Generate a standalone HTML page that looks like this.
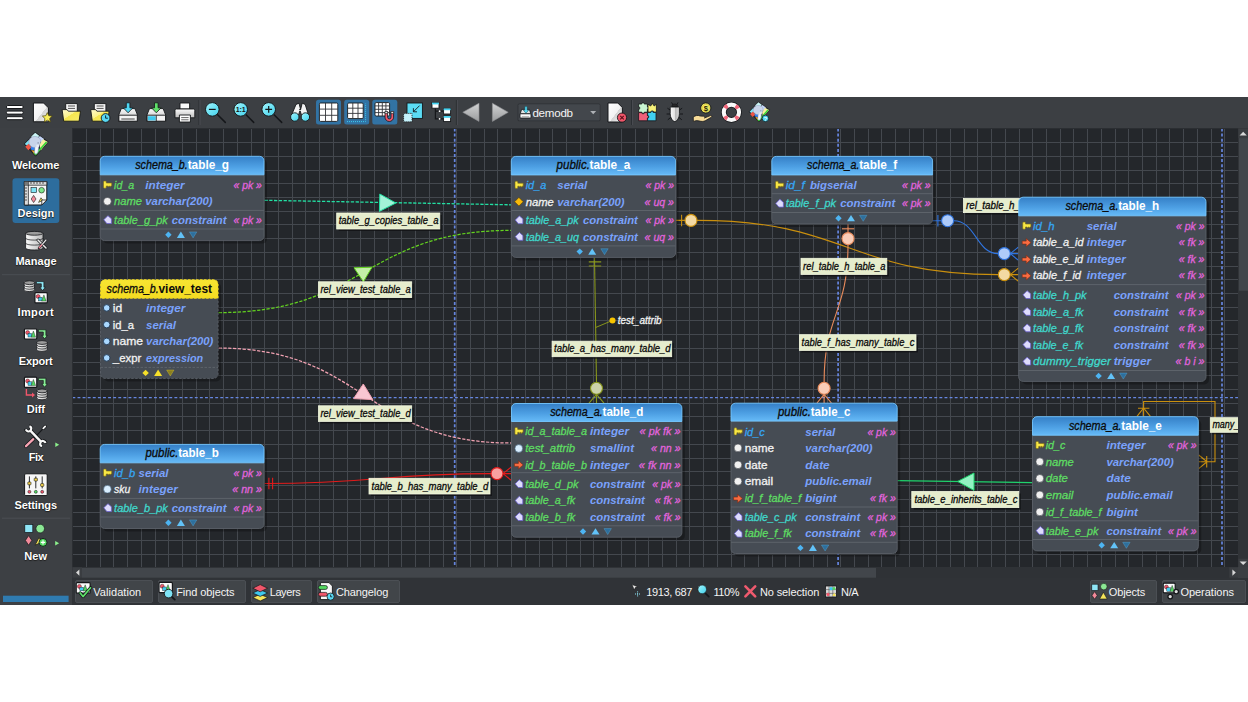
<!DOCTYPE html>
<html lang="en"><head><meta charset="utf-8"><title>pgModeler - demodb</title>
<style>
html,body{margin:0;padding:0;background:#fff;}
body{width:1248px;height:702px;overflow:hidden;position:relative;font-family:"Liberation Sans",sans-serif;}
#app{position:absolute;left:0;top:97px;width:1248px;height:508px;background:#3c3f43;overflow:hidden;}
#app svg{position:absolute;left:0;top:0;}
.t{position:absolute;white-space:pre;line-height:16px;height:16px;}
.sb{text-shadow:0 0 1px #111,0 1px 1px #222;}
#toolbar{position:absolute;left:0;top:0;width:1248px;height:32px;background:#3c3f43;}
#sidebar{position:absolute;left:0;top:31px;width:72px;height:477px;background:#3d4044;}
#canvas{position:absolute;left:72px;top:31px;width:1166px;height:439px;background:#24272b;overflow:hidden;}
#vscroll{position:absolute;left:1238px;top:31px;width:10px;height:439px;background:#303337;}
#hscroll{position:absolute;left:72px;top:470px;width:1166px;height:11px;background:#2f3236;}
#bottombar{position:absolute;left:72px;top:481px;width:1176px;height:27px;background:#303337;}
.btn{position:absolute;top:2.3px;height:22.9px;background:#414549;border:1px solid #4b4f54;box-sizing:border-box;border-radius:2px;}
</style></head><body>
<svg width="0" height="0" style="position:absolute"><defs>
<linearGradient id="gt" x1="0" y1="0" x2="0" y2="1"><stop offset="0" stop-color="#357fc6"/><stop offset="0.55" stop-color="#4d9fe3"/><stop offset="1" stop-color="#66baf7"/></linearGradient>
<linearGradient id="gv" x1="0" y1="0" x2="0" y2="1"><stop offset="0" stop-color="#f7e532"/><stop offset="1" stop-color="#f4dc22"/></linearGradient>
<linearGradient id="gpaper" x1="0" y1="0" x2="1" y2="1"><stop offset="0" stop-color="#ffffff"/><stop offset="0.55" stop-color="#f2f2f2"/><stop offset="0.56" stop-color="#d4d4d4"/><stop offset="1" stop-color="#f6f6f6"/></linearGradient>
<linearGradient id="gfold" x1="0" y1="0" x2="1" y2="1"><stop offset="0" stop-color="#fffbd0"/><stop offset="0.45" stop-color="#fbf28a"/><stop offset="0.47" stop-color="#f5e650"/><stop offset="1" stop-color="#f8ec6a"/></linearGradient>
<linearGradient id="gdrive" x1="0" y1="0" x2="0" y2="1"><stop offset="0" stop-color="#fafafa"/><stop offset="1" stop-color="#bdbdbd"/></linearGradient>
<linearGradient id="gcyan" x1="0" y1="0" x2="1" y2="1"><stop offset="0" stop-color="#a8f3fb"/><stop offset="0.5" stop-color="#6fe4f6"/><stop offset="1" stop-color="#45cfe9"/></linearGradient>
<linearGradient id="garrow" x1="0" y1="0" x2="0" y2="1"><stop offset="0" stop-color="#d2d3d4"/><stop offset="1" stop-color="#9a9c9e"/></linearGradient>
<linearGradient id="gbug" x1="0" y1="0" x2="1" y2="0"><stop offset="0" stop-color="#fafafa"/><stop offset="0.5" stop-color="#e2e2e2"/><stop offset="0.51" stop-color="#b5b5b5"/><stop offset="1" stop-color="#d8d8d8"/></linearGradient>
<linearGradient id="gcyl" x1="0" y1="0" x2="1" y2="0"><stop offset="0" stop-color="#fafafa"/><stop offset="1" stop-color="#b9b9b9"/></linearGradient>
</defs></svg>
<div id="app">
<div id="toolbar">
<svg width="1248.0" height="32.0" viewBox="0.0 97.0 1248.0 32.0" font-family="Liberation Sans, sans-serif">
<rect x="6.4" y="105.5" width="16.8" height="3" rx="1.4" fill="#fff" stroke="#15171a" stroke-width="1"/>
<rect x="6.4" y="111.1" width="16.8" height="3" rx="1.4" fill="#fff" stroke="#15171a" stroke-width="1"/>
<rect x="6.4" y="116.7" width="16.8" height="3" rx="1.4" fill="#fff" stroke="#15171a" stroke-width="1"/>
<path d="M33.4 103h10.2l4.8 4.8v14h-15z" fill="url(#gpaper)" stroke="#15171a" stroke-width="1"/>
<path d="M47.3 112.6l1.5 3.1 3.4 0.4-2.5 2.4 0.7 3.4-3.1-1.7-3 1.7 0.6-3.4-2.5-2.4 3.4-0.4z" fill="#f9ee5a" stroke="#4a4208" stroke-width="0.7"/>
<path d="M65.7 103.6h11.6v9h-11.6z" fill="#f4f4f4" stroke="#15171a" stroke-width="0.9"/><path d="M68.0 106h7M68.0 108.4h7" stroke="#555" stroke-width="1"/><path d="M62.1 109.6h5l1.2 1.6h12.2l-1.4 10h-15.4z" fill="url(#gfold)" stroke="#15171a" stroke-width="0.9"/>
<path d="M94.3 103.6h11.6v9h-11.6z" fill="#f4f4f4" stroke="#15171a" stroke-width="0.9"/><path d="M96.6 106h7M96.6 108.4h7" stroke="#555" stroke-width="1"/><path d="M90.7 109.6h5l1.2 1.6h12.2l-1.4 10h-15.4z" fill="url(#gfold)" stroke="#15171a" stroke-width="0.9"/>
<circle cx="105.6" cy="118" r="4.4" fill="#58d8f3" stroke="#15171a" stroke-width="0.9"/><path d="M105.6 115.4v2.8h2.2" stroke="#0b2b38" stroke-width="1" fill="none"/>
<path d="M121.3 108.6h13.6l2.6 6.4v6.4h-18.8v-6.4z" fill="url(#gdrive)" stroke="#15171a" stroke-width="0.9"/><path d="M118.89999999999999 115.2h18.4v6h-18.4z" fill="#f3f3f3" stroke="#15171a" stroke-width="0.9"/><path d="M121.3 119h13.4" stroke="#444" stroke-width="1"/><path d="M126.3 102.8h3.6v5h3l-4.8 5-4.8-5h3z" fill="#4fd6f2" stroke="#15171a" stroke-width="0.8"/>
<path d="M149.5 108.6h13.6l2.6 6.4v6.4h-18.8v-6.4z" fill="url(#gdrive)" stroke="#15171a" stroke-width="0.9"/><path d="M147.1 115.2h18.4v6h-18.4z" fill="#f3f3f3" stroke="#15171a" stroke-width="0.9"/><rect x="147.9" y="116.2" width="7.8" height="4.2" fill="#3fc9ee"/><path d="M156.3 115.4v5.8" stroke="#15171a" stroke-width="0.8"/><path d="M154.5 102.8h3.6v5h3l-4.8 5-4.8-5h3z" fill="#5fe06a" stroke="#15171a" stroke-width="0.8"/>
<path d="M180.0 103h9.6v6h-9.6z" fill="#fafafa" stroke="#15171a" stroke-width="0.9"/>
<path d="M176.4 109h17a1.4 1.4 0 0 1 1.4 1.4v7.4h-19.8v-7.4a1.4 1.4 0 0 1 1.4-1.4z" fill="url(#gdrive)" stroke="#15171a" stroke-width="0.9"/>
<path d="M179.4 115h11v7h-11z" fill="#fff" stroke="#15171a" stroke-width="0.9"/><path d="M181.20000000000002 117.6h7.4M181.20000000000002 119.8h7.4" stroke="#555" stroke-width="0.9"/>
<path d="M199 100v25" stroke="#2b2e32" stroke-width="1"/><path d="M200 100v25" stroke="#4a4d52" stroke-width="1"/>
<path d="M216.9 114l8.4 8.4" stroke="#15171a" stroke-width="1.5" stroke-linecap="round"/><circle cx="212.3" cy="109.4" r="6.8" fill="url(#gcyan)" stroke="#15171a" stroke-width="1"/><path d="M208.9 109.4h6.8" stroke="#15171a" stroke-width="1.2"/>
<path d="M245.29999999999998 114l8.4 8.4" stroke="#15171a" stroke-width="1.5" stroke-linecap="round"/><circle cx="240.7" cy="109.4" r="6.8" fill="url(#gcyan)" stroke="#15171a" stroke-width="1"/><text x="240.7" y="112.1" font-size="7" style="font-weight:bold" fill="#15171a" text-anchor="middle">1:1</text>
<path d="M273.3 114l8.4 8.4" stroke="#15171a" stroke-width="1.5" stroke-linecap="round"/><circle cx="268.7" cy="109.4" r="6.8" fill="url(#gcyan)" stroke="#15171a" stroke-width="1"/><path d="M265.3 109.4h6.8M268.7 106v6.8" stroke="#15171a" stroke-width="1.2"/>
<path d="M296 104.4l3-1.2 1.6 6.4h-1.2l1.2 0 1.6-6.4 3 1.2 3.6 11.6h-7l-1.6-5h-0.4l-1.6 5h-7z" fill="#f3f3f3" stroke="#15171a" stroke-width="0.9"/>
<circle cx="294.8" cy="117" r="4.2" fill="url(#gcyan)" stroke="#15171a" stroke-width="0.9"/><circle cx="305.4" cy="117" r="4.2" fill="url(#gcyan)" stroke="#15171a" stroke-width="0.9"/>
<rect x="316" y="99.8" width="25" height="24.8" rx="2.5" fill="#3273a4"/>
<rect x="344.2" y="99.8" width="25" height="24.8" rx="2.5" fill="#3273a4"/>
<rect x="372.3" y="99.8" width="25" height="24.8" rx="2.5" fill="#3273a4"/>
<rect x="319.4" y="103" width="18.4" height="18.4" rx="1.2" fill="#fff" stroke="#15171a" stroke-width="0.9"/><path d="M325.5 103v18.4M319.4 109.1h18.4" stroke="#33363a" stroke-width="0.9"/><path d="M331.7 103v18.4M319.4 115.3h18.4" stroke="#33363a" stroke-width="0.9"/>
<rect x="347.6" y="103" width="15.6" height="15.6" rx="1.2" fill="#fff" stroke="#15171a" stroke-width="0.9"/><path d="M352.8 103v15.6M347.6 108.2h15.6" stroke="#33363a" stroke-width="0.9"/><path d="M358.0 103v15.6M347.6 113.4h15.6" stroke="#33363a" stroke-width="0.9"/>
<path d="M347 121.6h18.6v-18" stroke="#3fc9ee" stroke-width="1" stroke-dasharray="1 1" fill="none"/>
<rect x="375" y="102.6" width="14.6" height="13.4" rx="1.2" fill="#fff" stroke="#15171a" stroke-width="0.9"/><path d="M378.6 102.6v13.4M375 105.9h14.6" stroke="#33363a" stroke-width="0.9"/><path d="M382.3 102.6v13.4M375 109.3h14.6" stroke="#33363a" stroke-width="0.9"/><path d="M385.9 102.6v13.4M375 112.6h14.6" stroke="#33363a" stroke-width="0.9"/>
<path d="M385 111.6v5.6a4.3 4.3 0 0 0 8.6 0v-5.6h-2.6v5.6a1.7 1.7 0 0 1-3.4 0v-5.6z" fill="#f0566a" stroke="#15171a" stroke-width="0.8"/><path d="M385 111.6h2.6v2h-2.6zM391 111.6h2.6v2h-2.6z" fill="#f3f3f3" stroke="#15171a" stroke-width="0.6"/>
<rect x="407" y="103" width="15.400" height="15.400" fill="#5bdcf5" stroke="#15171a" stroke-width="0.9"/>
<path d="M419.600 105.600l-6.200 6.200M413.400 108.200v3.600h3.600" stroke="#15171a" stroke-width="0.9" fill="none"/>
<rect x="403.600" y="113.400" width="8.400" height="8.400" fill="#c4f1fb" stroke="#15171a" stroke-width="0.8" stroke-dasharray="1.2 0.8"/>
<rect x="432" y="102.6" width="7" height="5.6" fill="#fff" stroke="#15171a" stroke-width="0.9"/><rect x="432" y="102.6" width="7" height="1.8" fill="#46d3f0"/>
<rect x="443.6" y="108.4" width="7" height="5.6" fill="#fff" stroke="#15171a" stroke-width="0.9"/><rect x="443.6" y="108.4" width="7" height="1.8" fill="#46d3f0"/>
<rect x="443.6" y="116" width="7" height="5.6" fill="#fff" stroke="#15171a" stroke-width="0.9"/><rect x="443.6" y="116" width="7" height="1.8" fill="#46d3f0"/>
<path d="M435.4 108.4v10.4h7.6M435.4 111.2h7.6" stroke="#15171a" stroke-width="1.2" fill="none"/><circle cx="439.6" cy="111.2" r="0.9" fill="#fff"/><circle cx="439.6" cy="118.8" r="0.9" fill="#fff"/>
<path d="M456.4 100v25" stroke="#2b2e32" stroke-width="1"/><path d="M457.4 100v25" stroke="#4a4d52" stroke-width="1"/>
<path d="M479 103.2v18.2l-16.2-9.1z" fill="url(#garrow)" stroke="#8d8f92" stroke-width="0.6"/>
<path d="M492.4 103.2v18.2l15.8-9.1z" fill="url(#garrow)" stroke="#8d8f92" stroke-width="0.6"/>
<rect x="517.600" y="103.400" width="82.800" height="17.800" rx="1.500" fill="#2d3034"/><rect x="518.400" y="104.200" width="81.400" height="16.400" rx="1" fill="#43474c"/>
<path d="M521.600 109.400h7.800l1.400 4.400h-10.600z" fill="#e4e4e4" stroke="#15171a" stroke-width="0.800"/>
<rect x="520" y="113.800" width="11" height="4.200" rx="0.800" fill="#fafafa" stroke="#15171a" stroke-width="0.800"/><path d="M521.800 116.600h7.400" stroke="#9a9a9a" stroke-width="0.700"/>
<path d="M524.900 106.600h2.200v3.600h1.600l-2.700 3-2.700-3h1.600z" fill="#55dcf5" stroke="#14505e" stroke-width="0.500"/>
<path d="M590.2 111l3 3.2 3-3.2z" fill="#aeb1b5"/>
<path d="M608 103h9.8l4.6 4.6v14.4h-14.4z" fill="url(#gpaper)" stroke="#15171a" stroke-width="1"/>
<circle cx="622" cy="117.6" r="4.6" fill="#f0566a" stroke="#15171a" stroke-width="0.9"/><path d="M620.2 115.8l3.6 3.6M623.8 115.8l-3.6 3.6" stroke="#5a0f18" stroke-width="1.1"/>
<path d="M631.6 100v25" stroke="#2b2e32" stroke-width="1"/><path d="M632.6 100v25" stroke="#4a4d52" stroke-width="1"/>
<path d="M638.6 104h3.2c-0.9-1.500 3.300-1.500 2.400 0h3.200v2.800c1.500-0.900 1.500 3.300 0 2.400v3h-3.100c0.900 1.500-3.300 1.500-2.400 0h-3.300v-2.900c1.500 0.900 1.500-3.300 0-2.400z" fill="#c9f6d2" stroke="#15171a" stroke-width="0.8"/>
<path d="M648 104.200l2.600 1.800 1.800-2.600 1.800 2.600 2.200-1.800v8h-2.800c0.900-1.500-3.300-1.500-2.400 0h-3.200z" fill="#f6f17a" stroke="#15171a" stroke-width="0.8"/>
<path d="M638.600 112.600h3.300c-0.900 1.500 3.300 1.500 2.400 0h3.100v3c1.500-0.900 1.500 3.300 0 2.400v2.800h-8.800z" fill="#f0607a" stroke="#15171a" stroke-width="0.8"/>
<path d="M647.600 112.400h3.200c-0.900-1.500 3.300-1.500 2.400 0h2.800v8.400h-8.400v-2.800c1.500 0.900 1.500-3.300 0-2.400z" fill="#41d1f1" stroke="#15171a" stroke-width="0.8"/>
<path d="M671 110.600l-3.600-2.400M678.600 110.600l3.600-2.400M671 114h-4.400M678.600 114h4.400M671.200 117l-3.400 2.800M678.400 117l3.400 2.800M673 105l-1.400-2.600M676.600 105l1.400-2.600" stroke="#15171a" stroke-width="1" fill="none"/>
<path d="M674.800 104c1.800 0 2.800 1 2.800 2.400h-5.600c0-1.400 1-2.400 2.800-2.400z" fill="#2a2a2a" stroke="#15171a" stroke-width="0.8"/>
<path d="M670.800 107h8c0.400 0 0.600 0.300 0.600 0.800v5.800c0 4-2.400 8-4.600 8s-4.600-4-4.600-8v-5.800c0-0.500 0.200-0.800 0.600-0.800z" fill="url(#gbug)" stroke="#15171a" stroke-width="0.9"/>
<circle cx="705.800" cy="108" r="5.100" fill="#f8f062" stroke="#15171a" stroke-width="0.9"/><circle cx="705.800" cy="108" r="3.700" fill="none" stroke="#c9b93a" stroke-width="0.600"/><text x="705.800" y="110.700" font-size="7.500" style="font-weight:bold" fill="#2a2608" text-anchor="middle">$</text>
<path d="M693.200 117c2.200-1.600 4.800-2 7-1l3.400 0.200c1.400 0.200 1.800 1.400 0.800 1.800l6-2.400c1.200-0.400 2 0.600 1 1.600l-6.200 3.600c-1.800 0.800-3.800 0.800-5.800 0.200l-2.800-0.400l-3.200 0.800z" fill="#f8dc98" stroke="#15171a" stroke-width="0.8"/>
<circle cx="731.4" cy="112.3" r="7.65" fill="none" stroke="#15171a" stroke-width="5.7"/><circle cx="731.4" cy="112.3" r="7.65" fill="none" stroke="#fafafa" stroke-width="4.1"/>
<circle cx="731.4" cy="112.3" r="7.65" fill="none" stroke="#f0667a" stroke-width="4.1" stroke-dasharray="3.6 8.417" transform="rotate(31.5 731.4 112.3)"/>
<g transform="translate(759.2 111.8) scale(0.84)"><path d="M-0.900 -11.800L12.100 -2.300L-0.400 12.100L-11.900 -0.100z" fill="#23262a" stroke="#1b1d20" stroke-width="0.800"/><path d="M-0.900 -11.300l4.200 3.100-4.600 3.800-3.600-3.200z" fill="#c9f4f5"/><path d="M3.800 -8l4.200 3-2.600 3.400-4.400-3.600z" fill="#c6d6f8"/><path d="M7 -4.800l4.700 2.600-3.500 4.200-3.600 4.400-1.200-6.200z" fill="#f7f0a0"/><path d="M-11.400 -0.200l4-3.900 2.400 3-3.200 3.200z" fill="#7fe1f1"/><path d="M-10.800 2.600l3.300-3 3 3.600-3.300 3z" fill="#f05544"/><path d="M-5.200 2l4.400 0.600-1 3.800-3.600-1z" fill="#3282f0"/><path d="M-4.800 5.800l3.200 1 1.600-1.600 1 2.600-2.600 2.600z" fill="#f3a321"/><path d="M-3 8.400l2.600 3.100 11.500-13-1.300-1.100-9.900 11.200z" fill="#37d637"/><path d="M-7.200 -2.400c0-3.200 2.600-5.200 5.800-5.200c3.400 0 6 2 6 4.800c0 1.800-0.700 3-1.700 3.900l-0.500 4.300c-0.300 2.200-0.900 4.400-2.400 4.400c-1.300 0-1.800-1.200-1.600-2.800l0.400-3.700c-0.800 0.100-1.700 0-2.600-0.300c-2.200-0.800-3.400-2.800-3.400-5.400z" fill="#c8d4ea" stroke="#8a9cbb" stroke-width="0.500"/><path d="M-0.600 3l-0.500 4.600c-0.100 1.200 0.300 1.900 1 1.900c0.900 0 1.400-1.600 1.600-3l0.500-3.600c-0.800 0.300-1.700 0.300-2.600 0.100z" fill="#f6f7fc"/><path d="M0.400 0.400c1 0.600 2.400 0.400 3-0.600l-0.400 2.600c-0.800 0.600-1.800 0.700-2.800 0.400z" fill="#e9edf6"/><circle cx="2" cy="-1.200" r="0.600" fill="#6b7590"/></g>
<circle cx="765.400" cy="118.400" r="3.300" fill="#46d3f0" stroke="#15171a" stroke-width="0.800"/><text x="765.400" y="120.600" font-size="6" style="font-weight:bold" fill="#e9fbff" text-anchor="middle">?</text>
</svg>
<span class="t" style="left:532.4px;top:8.0px;font-size:11.6px;font-weight:normal;font-style:normal;letter-spacing:-0.253px;color:#f4f4f4">demodb</span>
</div>
<div id="sidebar">
<svg width="72.0" height="477.0" viewBox="0.0 128.0 72.0 477.0" font-family="Liberation Sans, sans-serif">
<g transform="translate(36.1 144.1) scale(1.0)"><path d="M-0.900 -11.800L12.100 -2.300L-0.400 12.100L-11.900 -0.100z" fill="#23262a" stroke="#1b1d20" stroke-width="0.800"/><path d="M-0.900 -11.300l4.200 3.100-4.600 3.800-3.600-3.200z" fill="#c9f4f5"/><path d="M3.800 -8l4.200 3-2.600 3.400-4.400-3.600z" fill="#c6d6f8"/><path d="M7 -4.800l4.700 2.600-3.500 4.200-3.600 4.400-1.200-6.200z" fill="#f7f0a0"/><path d="M-11.400 -0.200l4-3.900 2.400 3-3.200 3.200z" fill="#7fe1f1"/><path d="M-10.800 2.600l3.300-3 3 3.600-3.300 3z" fill="#f05544"/><path d="M-5.200 2l4.400 0.600-1 3.800-3.600-1z" fill="#3282f0"/><path d="M-4.800 5.800l3.200 1 1.600-1.600 1 2.600-2.600 2.600z" fill="#f3a321"/><path d="M-3 8.400l2.600 3.100 11.500-13-1.300-1.100-9.900 11.200z" fill="#37d637"/><path d="M-7.200 -2.400c0-3.200 2.600-5.200 5.800-5.200c3.400 0 6 2 6 4.800c0 1.800-0.700 3-1.700 3.900l-0.500 4.300c-0.300 2.200-0.900 4.400-2.400 4.400c-1.300 0-1.800-1.200-1.600-2.800l0.400-3.700c-0.800 0.100-1.700 0-2.600-0.300c-2.200-0.800-3.400-2.800-3.400-5.400z" fill="#c8d4ea" stroke="#8a9cbb" stroke-width="0.500"/><path d="M-0.600 3l-0.500 4.600c-0.100 1.200 0.300 1.900 1 1.900c0.900 0 1.400-1.600 1.600-3l0.500-3.600c-0.800 0.300-1.700 0.300-2.600 0.100z" fill="#f6f7fc"/><path d="M0.400 0.400c1 0.600 2.400 0.400 3-0.600l-0.400 2.600c-0.800 0.600-1.800 0.700-2.800 0.400z" fill="#e9edf6"/><circle cx="2" cy="-1.200" r="0.600" fill="#6b7590"/></g>
<rect x="12.5" y="178.2" width="46.8" height="44.8" rx="3" fill="#2d6d9d"/>
<path d="M24.4 181.6h22.4v18.4l-5 5h-17.4z" fill="#f7f7f7" stroke="#15171a" stroke-width="1"/>
<path d="M24.4 181.6h22.4v3.6h-22.4zM24.4 181.6h4v23.400h-4z" fill="#dcdcdc" stroke="#15171a" stroke-width="0.7"/>
<rect x="24.4" y="181.6" width="4" height="3.6" fill="#777"/>
<path d="M31 182v2M34 182v2M37 182v2M40 182v2M43 182v2M25 188h2M25 191h2M25 194h2M25 197h2M25 200h2" stroke="#15171a" stroke-width="0.7"/>
<rect x="31" y="187.600" width="5.6" height="5" fill="#7fe3f5" stroke="#15171a" stroke-width="0.6"/>
<circle cx="41.6" cy="190.2" r="2.8" fill="#7fe68a" stroke="#15171a" stroke-width="0.6"/>
<path d="M33.6 195.400l2.400 3.600-2.400 3.600-2.400-3.600z" fill="#f28a9a" stroke="#15171a" stroke-width="0.6"/>
<path d="M38.6 202.400l2.400-4.600 1.800 2.600z" fill="#f5e45a" stroke="#15171a" stroke-width="0.6"/>
<path d="M46.800 200l-5 5v-5z" fill="#fff" stroke="#15171a" stroke-width="0.8"/>
<path d="M25.6 233.3v14.8a8.7 1.9 0 0 0 17.4 0v-14.8z" fill="url(#gcyl)" stroke="#15171a" stroke-width="0.8"/><path d="M25.6 238.2a8.7 1.9 0 0 0 17.4 0" fill="none" stroke="#15171a" stroke-width="0.7"/><path d="M25.6 243.2a8.7 1.9 0 0 0 17.4 0" fill="none" stroke="#15171a" stroke-width="0.7"/><ellipse cx="34.3" cy="233.3" rx="8.7" ry="1.9" fill="#9c9c9c" stroke="#15171a" stroke-width="0.8"/>
<path d="M38 240l8 8" stroke="#15171a" stroke-width="3" stroke-linecap="round"/><path d="M38 240l8 8" stroke="#e8e8e8" stroke-width="1.6" stroke-linecap="round"/>
<path d="M46 240l-7 8" stroke="#15171a" stroke-width="2.4" stroke-linecap="round"/><path d="M46 240l-4 4.600" stroke="#e8e8e8" stroke-width="1.2" stroke-linecap="round"/><path d="M41.600 245l-2.400 2.800" stroke="#f28a9a" stroke-width="1.4" stroke-linecap="round"/>
<path d="M2 274.700h68" stroke="#4b4e53" stroke-width="1"/>
<path d="M24.2 282.7v7.000000000000001a5.2 1.9 0 0 0 10.4 0v-7.000000000000001z" fill="url(#gcyl)" stroke="#15171a" stroke-width="0.8"/><path d="M24.2 285.0a5.2 1.9 0 0 0 10.4 0" fill="none" stroke="#15171a" stroke-width="0.7"/><path d="M24.2 287.4a5.2 1.9 0 0 0 10.4 0" fill="none" stroke="#15171a" stroke-width="0.7"/><ellipse cx="29.4" cy="282.7" rx="5.2" ry="1.9" fill="#9c9c9c" stroke="#15171a" stroke-width="0.8"/>
<path d="M36.4 281.6H43.9V287.2H45.4L42.6 290.6L39.8 287.2H41.3V283.8H36.4z" fill="#8feaf8" stroke="#15171a" stroke-width="0.7"/>
<rect x="34.9" y="292.7" width="12.4" height="10.2" rx="1" fill="#fbfbfb" stroke="#15171a" stroke-width="1.2"/><circle cx="38.1" cy="296.5" r="2" fill="#f0566a" stroke="#15171a" stroke-width="0.4"/><rect x="38.5" y="297.3" width="3.6" height="3.6" fill="#3fc9ee" stroke="#15171a" stroke-width="0.4"/><path d="M41.699999999999996 301.09999999999997l2.200-6.200 2.200 6.200z" fill="#53d860" stroke="#15171a" stroke-width="0.4"/>
<rect x="24.4" y="328.8" width="12.4" height="10.2" rx="1" fill="#fbfbfb" stroke="#15171a" stroke-width="1.2"/><circle cx="27.599999999999998" cy="332.6" r="2" fill="#f0566a" stroke="#15171a" stroke-width="0.4"/><rect x="28.0" y="333.40000000000003" width="3.6" height="3.6" fill="#3fc9ee" stroke="#15171a" stroke-width="0.4"/><path d="M31.2 337.2l2.200-6.200 2.200 6.200z" fill="#53d860" stroke="#15171a" stroke-width="0.4"/>
<path d="M38.4 329.8H45.9V335.4H47.4L44.6 338.8L41.8 335.4H43.3V332.0H38.4z" fill="#86ee94" stroke="#15171a" stroke-width="0.7"/>
<path d="M36.8 342.5v7.000000000000001a5.2 1.9 0 0 0 10.4 0v-7.000000000000001z" fill="url(#gcyl)" stroke="#15171a" stroke-width="0.8"/><path d="M36.8 344.8a5.2 1.9 0 0 0 10.4 0" fill="none" stroke="#15171a" stroke-width="0.7"/><path d="M36.8 347.2a5.2 1.9 0 0 0 10.4 0" fill="none" stroke="#15171a" stroke-width="0.7"/><ellipse cx="42.0" cy="342.5" rx="5.2" ry="1.9" fill="#9c9c9c" stroke="#15171a" stroke-width="0.8"/>
<rect x="24.4" y="377.2" width="12.4" height="10.2" rx="1" fill="#fbfbfb" stroke="#15171a" stroke-width="1.2"/><circle cx="27.599999999999998" cy="381.0" r="2" fill="#f0566a" stroke="#15171a" stroke-width="0.4"/><rect x="28.0" y="381.8" width="3.6" height="3.6" fill="#3fc9ee" stroke="#15171a" stroke-width="0.4"/><path d="M31.2 385.59999999999997l2.200-6.200 2.200 6.200z" fill="#53d860" stroke="#15171a" stroke-width="0.4"/>
<path d="M38.4 378.2H45.9V383.8H47.4L44.6 387.2L41.8 383.8H43.3V380.4H38.4z" fill="#86ee94" stroke="#15171a" stroke-width="0.7"/>
<path d="M36.8 390.9v7.000000000000001a5.2 1.9 0 0 0 10.4 0v-7.000000000000001z" fill="url(#gcyl)" stroke="#15171a" stroke-width="0.8"/><path d="M36.8 393.2a5.2 1.9 0 0 0 10.4 0" fill="none" stroke="#15171a" stroke-width="0.7"/><path d="M36.8 395.6a5.2 1.9 0 0 0 10.4 0" fill="none" stroke="#15171a" stroke-width="0.7"/><ellipse cx="42.0" cy="390.9" rx="5.2" ry="1.9" fill="#9c9c9c" stroke="#15171a" stroke-width="0.8"/>
<path d="M26.400 389v6h6" stroke="#f0566a" stroke-width="1.400" fill="none"/><path d="M32 392.600l3 2.400-3 2.400z" fill="#f0566a"/>
<path d="M44.300 427.400l-11 11.600" stroke="#15171a" stroke-width="1.100" stroke-linecap="round"/>
<path d="M45.200 426.400l-1.900 2" stroke="#15171a" stroke-width="3.200" stroke-linecap="round"/><path d="M45.200 426.400l-1.900 2" stroke="#f6f6f6" stroke-width="1.800" stroke-linecap="round"/>
<path d="M33.300 439.200l-7.300 7" stroke="#15171a" stroke-width="3.800" stroke-linecap="round"/><path d="M33.300 439.200l-7.300 7" stroke="#f7a3b3" stroke-width="2.300" stroke-linecap="round"/>
<path d="M30.400 430.600l10.700 11.200" stroke="#15171a" stroke-width="4" stroke-linecap="butt"/>
<circle cx="28.500" cy="428.700" r="2.700" fill="none" stroke="#15171a" stroke-width="3.600" stroke-dasharray="11.600 5.360" transform="rotate(282 28.500 428.700)"/>
<circle cx="42.900" cy="443.700" r="2.700" fill="none" stroke="#15171a" stroke-width="3.600" stroke-dasharray="11.600 5.360" transform="rotate(102 42.900 443.700)"/>
<path d="M30.400 430.600l10.700 11.200" stroke="#f8f8f8" stroke-width="2.400" stroke-linecap="butt"/>
<circle cx="28.500" cy="428.700" r="2.700" fill="none" stroke="#f8f8f8" stroke-width="2.100" stroke-dasharray="10.800 6.160" transform="rotate(290 28.500 428.700)"/>
<circle cx="42.900" cy="443.700" r="2.700" fill="none" stroke="#f8f8f8" stroke-width="2.100" stroke-dasharray="10.800 6.160" transform="rotate(110 42.900 443.700)"/>
<path d="M55.300 442.500l3.900 2.200-3.900 2.200z" fill="#8cf08c"/>
<rect x="24.600" y="473.800" width="22.600" height="21.800" rx="1.200" fill="#f7f7f7" stroke="#15171a" stroke-width="1"/>
<path d="M29.4 476.400v12" stroke="#15171a" stroke-width="0.9"/>
<rect x="27.799999999999997" y="482.0" width="3.200" height="2.800" rx="0.6" fill="#f5d34a" stroke="#15171a" stroke-width="0.6"/>
<circle cx="29.4" cy="491.800" r="1.500" fill="#f0566a" stroke="#15171a" stroke-width="0.500"/>
<path d="M35.8 476.400v12" stroke="#15171a" stroke-width="0.9"/>
<rect x="34.199999999999996" y="478.20000000000005" width="3.200" height="2.800" rx="0.6" fill="#f5d34a" stroke="#15171a" stroke-width="0.6"/>
<circle cx="35.8" cy="491.800" r="1.500" fill="#53d860" stroke="#15171a" stroke-width="0.500"/>
<path d="M42.2 476.400v12" stroke="#15171a" stroke-width="0.9"/>
<rect x="40.6" y="483.6" width="3.200" height="2.800" rx="0.6" fill="#f5d34a" stroke="#15171a" stroke-width="0.6"/>
<circle cx="42.2" cy="491.800" r="1.500" fill="#f0566a" stroke="#15171a" stroke-width="0.500"/>
<path d="M2 518.200h68" stroke="#4b4e53" stroke-width="1"/>
<rect x="24.800" y="524.400" width="8" height="8" fill="#8fe6f7" stroke="#15171a" stroke-width="0.7"/>
<circle cx="40.200" cy="528.600" r="4.300" fill="#8be894" stroke="#15171a" stroke-width="0.7"/>
<path d="M28.600 535.600l3.200 4.800-3.200 4.800-3.200-4.800z" fill="#f28a9a" stroke="#15171a" stroke-width="0.7"/>
<path d="M35 545.200l4-7.600 3 4.400z" fill="#f5e45a" stroke="#15171a" stroke-width="0.7"/>
<circle cx="43" cy="542.400" r="4" fill="#53d860" stroke="#15171a" stroke-width="0.9"/><path d="M40.800 542.400h4.400M43 540.200v4.400" stroke="#fff" stroke-width="1.200"/>
<path d="M55.200 541l3.900 2.200-3.900 2.200z" fill="#8cf08c"/>
<rect x="3" y="595.700" width="65.600" height="6.300" fill="#2f7bb0"/>
</svg>
<span class="t sb" style="left:12.1px;top:29.3px;font-size:11px;font-weight:bold;font-style:normal;letter-spacing:-0.156px;color:#ffffff">Welcome</span>
<span class="t sb" style="left:17.6px;top:77.4px;font-size:11px;font-weight:bold;font-style:normal;letter-spacing:-0.012px;color:#ffffff">Design</span>
<span class="t sb" style="left:15.4px;top:125.4px;font-size:11px;font-weight:bold;font-style:normal;letter-spacing:0.041px;color:#ffffff">Manage</span>
<span class="t sb" style="left:17.5px;top:176.4px;font-size:11px;font-weight:bold;font-style:normal;letter-spacing:0.380px;color:#ffffff">Import</span>
<span class="t sb" style="left:18.8px;top:225.0px;font-size:11px;font-weight:bold;font-style:normal;letter-spacing:-0.173px;color:#ffffff">Export</span>
<span class="t sb" style="left:26.7px;top:272.6px;font-size:11px;font-weight:bold;font-style:normal;letter-spacing:-0.006px;color:#ffffff">Diff</span>
<span class="t sb" style="left:28.7px;top:321.0px;font-size:11px;font-weight:bold;font-style:normal;letter-spacing:-0.531px;color:#ffffff">Fix</span>
<span class="t sb" style="left:14.4px;top:369.2px;font-size:11px;font-weight:bold;font-style:normal;letter-spacing:-0.099px;color:#ffffff">Settings</span>
<span class="t sb" style="left:24.3px;top:419.8px;font-size:11px;font-weight:bold;font-style:normal;letter-spacing:0.028px;color:#ffffff">New</span>
</div>
<div id="canvas">
<svg width="1166.0" height="439.0" viewBox="72.0 128.0 1166.0 439.0" font-family="Liberation Sans, sans-serif">
<path d="M86.50 128.5V567.3M100.21 128.5V567.3M113.93 128.5V567.3M127.64 128.5V567.3M141.36 128.5V567.3M155.07 128.5V567.3M168.79 128.5V567.3M182.50 128.5V567.3M196.21 128.5V567.3M209.93 128.5V567.3M223.64 128.5V567.3M237.36 128.5V567.3M251.07 128.5V567.3M264.79 128.5V567.3M278.50 128.5V567.3M292.21 128.5V567.3M305.93 128.5V567.3M319.64 128.5V567.3M333.36 128.5V567.3M347.07 128.5V567.3M360.79 128.5V567.3M374.50 128.5V567.3M388.21 128.5V567.3M401.93 128.5V567.3M415.64 128.5V567.3M429.36 128.5V567.3M443.07 128.5V567.3M456.79 128.5V567.3M470.50 128.5V567.3M484.21 128.5V567.3M497.93 128.5V567.3M511.64 128.5V567.3M525.36 128.5V567.3M539.07 128.5V567.3M552.79 128.5V567.3M566.50 128.5V567.3M580.21 128.5V567.3M593.93 128.5V567.3M607.64 128.5V567.3M621.36 128.5V567.3M635.07 128.5V567.3M648.79 128.5V567.3M662.50 128.5V567.3M676.21 128.5V567.3M689.93 128.5V567.3M703.64 128.5V567.3M717.36 128.5V567.3M731.07 128.5V567.3M744.79 128.5V567.3M758.50 128.5V567.3M772.21 128.5V567.3M785.93 128.5V567.3M799.64 128.5V567.3M813.36 128.5V567.3M827.07 128.5V567.3M840.79 128.5V567.3M854.50 128.5V567.3M868.21 128.5V567.3M881.93 128.5V567.3M895.64 128.5V567.3M909.36 128.5V567.3M923.07 128.5V567.3M936.79 128.5V567.3M950.50 128.5V567.3M964.21 128.5V567.3M977.93 128.5V567.3M991.64 128.5V567.3M1005.36 128.5V567.3M1019.07 128.5V567.3M1032.79 128.5V567.3M1046.50 128.5V567.3M1060.21 128.5V567.3M1073.93 128.5V567.3M1087.64 128.5V567.3M1101.36 128.5V567.3M1115.07 128.5V567.3M1128.79 128.5V567.3M1142.50 128.5V567.3M1156.21 128.5V567.3M1169.93 128.5V567.3M1183.64 128.5V567.3M1197.36 128.5V567.3M1211.07 128.5V567.3M1224.79 128.5V567.3M72.4 142.60H1238.3M72.4 156.31H1238.3M72.4 170.03H1238.3M72.4 183.74H1238.3M72.4 197.46H1238.3M72.4 211.17H1238.3M72.4 224.89H1238.3M72.4 238.60H1238.3M72.4 252.31H1238.3M72.4 266.03H1238.3M72.4 279.74H1238.3M72.4 293.46H1238.3M72.4 307.17H1238.3M72.4 320.89H1238.3M72.4 334.60H1238.3M72.4 348.31H1238.3M72.4 362.03H1238.3M72.4 375.74H1238.3M72.4 389.46H1238.3M72.4 403.17H1238.3M72.4 416.89H1238.3M72.4 430.60H1238.3M72.4 444.31H1238.3M72.4 458.03H1238.3M72.4 471.74H1238.3M72.4 485.46H1238.3M72.4 499.17H1238.3M72.4 512.89H1238.3M72.4 526.60H1238.3M72.4 540.31H1238.3M72.4 554.03H1238.3" stroke="#44484e" stroke-width="1" fill="none" shape-rendering="crispEdges"/>
<path d="M454.7 128.5V567.3M838.1 128.5V567.3M1222 128.5V567.3" stroke="#6686df" stroke-width="1.7" stroke-dasharray="3 2.1" fill="none"/>
<path d="M72.4 397.600H1238.3" stroke="#6686df" stroke-width="1.2" stroke-dasharray="2.9 2.2" fill="none"/>
<path d="M72 128.5H1238.3M72.5 128V567.3" stroke="#2b2e32" stroke-width="1" fill="none"/>
<path d="M264.4 200.3L511 204.800" stroke="#22dfa2" stroke-width="1.3" stroke-dasharray="3.3 1.5" fill="none"/>
<path d="M379.8 194L395.8 203L379.4 211.4z" fill="#a3f2d8" stroke="#22dfa2" stroke-width="1"/>
<path d="M218.5 312.6C365 312.6 365 230.4 511 230.4" stroke="#63d31f" stroke-width="1.25" stroke-dasharray="3.3 1.5" fill="none"/>
<path d="M354 267.8L372 267.2L363.4 281.8z" fill="#c4f0a8" stroke="#63d31f" stroke-width="1"/>
<path d="M218.5 348.1C365 348.1 365 443 511 443" stroke="#f2a3b3" stroke-width="1.25" stroke-dasharray="3.3 1.5" fill="none"/>
<path d="M363.3 384L372.8 399.6L353.6 398.6z" fill="#f9c6d2" stroke="#f2a3b3" stroke-width="1"/>
<path d="M264.4 483.5C380 483.5 380 473.6 491 473.6" stroke="#e31b1b" stroke-width="1.1" fill="none"/>
<path d="M268.9 477.8v11.4M272.6 477.8v11.4" stroke="#e31b1b" stroke-width="1.1"/>
<path d="M503 473.6L511.3 467M503 473.6H511.3M503 473.6L511.3 480.4" stroke="#e31b1b" stroke-width="1.1"/>
<circle cx="497.0" cy="473.6" r="6" fill="#f9a0a0" stroke="#e31b1b" stroke-width="1.1"/>
<path d="M594.5 257.5L596.5 382.3" stroke="#87951c" stroke-width="1.1" fill="none"/>
<path d="M588.8 261.9h12.4M588.8 266h12.4" stroke="#87951c" stroke-width="1.1"/>
<path d="M595.6 327.5L612.5 320.4" stroke="#87951c" stroke-width="1"/>
<path d="M596.5 394.3L589 403.2M596.5 394.3V403.2M596.5 394.3L604 403.2" stroke="#87951c" stroke-width="1.1"/>
<circle cx="596.5" cy="388.3" r="6" fill="#cdd3ab" stroke="#87951c" stroke-width="1.1"/>
<circle cx="612.5" cy="320.4" r="3" fill="#f7c400"/>
<text x="617.7" y="324.3" fill="#f2f2f2" stroke="#f2f2f2" stroke-width="0.3" font-size="10.8" style="font-style:italic;" text-anchor="start" textLength="44.0" lengthAdjust="spacingAndGlyphs">test_attrib</text>
<path d="M676 220.4H685M697 220.4C848 220.4 848 274.6 998.3 274.6" stroke="#c98f0e" stroke-width="1.1" fill="none"/>
<path d="M681.6 214.8v11.4" stroke="#c98f0e" stroke-width="1.1"/>
<path d="M1010.3 274.6L1018.5 268M1010.3 274.6H1018.5M1010.3 274.6L1018.5 281.4" stroke="#c98f0e" stroke-width="1.1"/>
<circle cx="691.0" cy="220.4" r="6" fill="#f3d9a3" stroke="#c98f0e" stroke-width="1.1"/>
<circle cx="1004.3" cy="274.6" r="6" fill="#f3d9a3" stroke="#c98f0e" stroke-width="1.1"/>
<path d="M848 224V232.6M848 244.6C848 314 824.1 314 824.1 382.3" stroke="#ea8c5c" stroke-width="1.1" fill="none"/>
<path d="M842 228.8h12.2" stroke="#ea8c5c" stroke-width="1.1"/>
<path d="M824.1 394.3L817 403M824.1 394.3V403M824.1 394.3L831.4 403" stroke="#ea8c5c" stroke-width="1.1"/>
<circle cx="848.0" cy="238.6" r="6" fill="#f9cdb8" stroke="#ea8c5c" stroke-width="1.1"/>
<circle cx="824.1" cy="388.3" r="6" fill="#f9cdb8" stroke="#ea8c5c" stroke-width="1.1"/>
<path d="M933 220.7H941.6M953.6 220.7C976 220.7 976 253.6 998.3 253.6" stroke="#2f74df" stroke-width="1.1" fill="none"/>
<path d="M937.9 215v11.4" stroke="#2f74df" stroke-width="1.1"/>
<path d="M1010.3 253.6L1018.5 247M1010.3 253.6H1018.5M1010.3 253.6L1018.5 260.4" stroke="#2f74df" stroke-width="1.1"/>
<circle cx="947.6" cy="220.7" r="6" fill="#aecbf9" stroke="#2f74df" stroke-width="1.1"/>
<circle cx="1004.3" cy="253.6" r="6" fill="#aecbf9" stroke="#2f74df" stroke-width="1.1"/>
<path d="M897.6 480.6L1032.3 482.6" stroke="#1fd36c" stroke-width="1.2" fill="none"/>
<path d="M957.6 481.4L974 473V490.4z" fill="#93f2c2" stroke="#1fd36c" stroke-width="1"/>
<path d="M1143.6 416.4V401.5H1215V461.8H1198.7" stroke="#c98f0e" stroke-width="1.1" fill="none"/>
<path d="M1143.6 408L1137 416.4M1143.6 408L1150.4 416.4M1138 408.3h11.4" stroke="#c98f0e" stroke-width="1.1"/>
<path d="M1207 461.8L1198.7 455M1207 461.8L1198.7 468.6M1206.7 456v11.6" stroke="#c98f0e" stroke-width="1.1"/>
<rect x="338.7" y="215.0" width="103.1" height="16.0" fill="#101214" opacity="0.8"/>
<rect x="336.7" y="213.0" width="103.1" height="16.0" fill="#e6edcd" stroke="#f4f9e2" stroke-width="0.8"/>
<text x="338.7" y="224.4" fill="#0a0a0a" stroke="#0a0a0a" stroke-width="0.3" font-size="10.8" style="font-style:italic;" text-anchor="start" textLength="99.8" lengthAdjust="spacingAndGlyphs">table_g_copies_table_a</text>
<rect x="320.5" y="283.8" width="93.2" height="15.8" fill="#101214" opacity="0.8"/>
<rect x="318.5" y="281.8" width="93.2" height="15.8" fill="#e6edcd" stroke="#f4f9e2" stroke-width="0.8"/>
<text x="320.5" y="293.1" fill="#0a0a0a" stroke="#0a0a0a" stroke-width="0.3" font-size="10.8" style="font-style:italic;" text-anchor="start" textLength="90.2" lengthAdjust="spacingAndGlyphs">rel_view_test_table_a</text>
<rect x="320.5" y="407.8" width="93.2" height="15.6" fill="#101214" opacity="0.8"/>
<rect x="318.5" y="405.8" width="93.2" height="15.6" fill="#e6edcd" stroke="#f4f9e2" stroke-width="0.8"/>
<text x="320.5" y="417.0" fill="#0a0a0a" stroke="#0a0a0a" stroke-width="0.3" font-size="10.8" style="font-style:italic;" text-anchor="start" textLength="90.2" lengthAdjust="spacingAndGlyphs">rel_view_test_table_d</text>
<rect x="371.0" y="480.3" width="121.0" height="15.7" fill="#101214" opacity="0.8"/>
<rect x="369.0" y="478.3" width="121.0" height="15.7" fill="#e6edcd" stroke="#f4f9e2" stroke-width="0.8"/>
<text x="371.5" y="489.5" fill="#0a0a0a" stroke="#0a0a0a" stroke-width="0.3" font-size="10.8" style="font-style:italic;" text-anchor="start" textLength="116.7" lengthAdjust="spacingAndGlyphs">table_b_has_many_table_d</text>
<rect x="554.1" y="343.2" width="119.6" height="15.5" fill="#101214" opacity="0.8"/>
<rect x="552.1" y="341.2" width="119.6" height="15.5" fill="#e6edcd" stroke="#f4f9e2" stroke-width="0.8"/>
<text x="554.0" y="352.3" fill="#0a0a0a" stroke="#0a0a0a" stroke-width="0.3" font-size="10.8" style="font-style:italic;" text-anchor="start" textLength="116.6" lengthAdjust="spacingAndGlyphs">table_a_has_many_table_d</text>
<rect x="803.0" y="260.3" width="85.8" height="16.1" fill="#101214" opacity="0.8"/>
<rect x="801.0" y="258.3" width="85.8" height="16.1" fill="#e6edcd" stroke="#f4f9e2" stroke-width="0.8"/>
<text x="803.1" y="269.8" fill="#0a0a0a" stroke="#0a0a0a" stroke-width="0.3" font-size="10.8" style="font-style:italic;" text-anchor="start" textLength="82.4" lengthAdjust="spacingAndGlyphs">rel_table_h_table_a</text>
<rect x="801.4" y="336.7" width="116.6" height="15.7" fill="#101214" opacity="0.8"/>
<rect x="799.4" y="334.7" width="116.6" height="15.7" fill="#e6edcd" stroke="#f4f9e2" stroke-width="0.8"/>
<text x="801.6" y="345.9" fill="#0a0a0a" stroke="#0a0a0a" stroke-width="0.3" font-size="10.8" style="font-style:italic;" text-anchor="start" textLength="112.8" lengthAdjust="spacingAndGlyphs">table_f_has_many_table_c</text>
<rect x="913.8" y="493.5" width="107.0" height="16.1" fill="#101214" opacity="0.8"/>
<rect x="911.8" y="491.5" width="107.0" height="16.1" fill="#e6edcd" stroke="#f4f9e2" stroke-width="0.8"/>
<text x="914.4" y="502.9" fill="#0a0a0a" stroke="#0a0a0a" stroke-width="0.3" font-size="10.8" style="font-style:italic;" text-anchor="start" textLength="103.2" lengthAdjust="spacingAndGlyphs">table_e_inherits_table_c</text>
<rect x="965.5" y="200.5" width="88.5" height="14.1" fill="#101214" opacity="0.8"/>
<rect x="963.5" y="198.5" width="88.5" height="14.1" fill="#e6edcd" stroke="#f4f9e2" stroke-width="0.8"/>
<text x="966.0" y="209.0" fill="#0a0a0a" stroke="#0a0a0a" stroke-width="0.3" font-size="10.8" style="font-style:italic;" text-anchor="start" textLength="83.5" lengthAdjust="spacingAndGlyphs">rel_table_h_table_f</text>
<rect x="1212.3" y="419.7" width="141.7" height="14.6" fill="#101214" opacity="0.8"/>
<rect x="1210.3" y="417.7" width="141.7" height="14.6" fill="#e6edcd" stroke="#f4f9e2" stroke-width="0.8"/>
<text x="1212.4" y="428.4" fill="#0a0a0a" stroke="#0a0a0a" stroke-width="0.3" font-size="10.8" style="font-style:italic;" text-anchor="start" textLength="136.6" lengthAdjust="spacingAndGlyphs">many_table_e_has_many_table_e</text>
<g id="table_g">
<path d="M103.2 163.8a4.5 4.5 0 0 1 4.5 -4.5h154.8a4.5 4.5 0 0 1 4.5 4.5v75.3a4.5 4.5 0 0 1 -4.5 4.5h-154.8a4.5 4.5 0 0 1 -4.5 -4.5z" fill="#000" opacity="0.26"/>
<path d="M100.2 174.8h163.8v61.3a4.5 4.5 0 0 1 -4.5 4.5h-154.8a4.5 4.5 0 0 1 -4.5 -4.5z" fill="#464c54" stroke="#5a6068" stroke-width="0.9"/>
<path d="M100.2 210.4h163.8" stroke="#5d636a" stroke-width="1"/>
<path d="M100.2 229.0h163.8" stroke="#5d636a" stroke-width="1"/>
<path d="M100.2 174.8v-14.0a4.5 4.5 0 0 1 4.5 -4.5h154.8a4.5 4.5 0 0 1 4.5 4.5v14.0z" fill="url(#gt)" stroke="#74c6ff" stroke-width="0.9"/>
<text x="135.2" y="169.3" fill="#0b0b0b" stroke="#0b0b0b" stroke-width="0.3" font-size="12" style="font-style:italic;" text-anchor="start" textLength="52.6" lengthAdjust="spacingAndGlyphs">schema_b.</text>
<text x="187.7" y="169.3" fill="#ffffff" font-size="12" style="font-weight:bold;" text-anchor="start" textLength="41.3" lengthAdjust="spacingAndGlyphs">table_g</text>
<path d="M103.50 182.00a1 1 0 0 1 1 -1h0.8a1 1 0 0 1 1 1v1h5.4v3h-1.1v0.8h-1v-0.8h-0.8v0.8h-1v-0.8h-1.500v1.200a1 1 0 0 1 -1 1h-0.8a1 1 0 0 1 -1 -1z" fill="#f8e745" stroke="#7a6a12" stroke-width="0.6"/>
<text x="114.1" y="188.8" fill="#5edc63" stroke="#5edc63" stroke-width="0.3" font-size="11.6" style="font-style:italic;" text-anchor="start" textLength="20.0" lengthAdjust="spacingAndGlyphs">id_a</text>
<text x="145.3" y="188.8" fill="#7aa2fc" font-size="11.6" style="font-style:italic;font-weight:bold;" text-anchor="start" textLength="39.2" lengthAdjust="spacingAndGlyphs">integer</text>
<text x="233.5" y="188.8" fill="#e264de" stroke="#e264de" stroke-width="0.3" font-size="11.6" style="font-style:italic;" text-anchor="start" textLength="28.4" lengthAdjust="spacingAndGlyphs">« pk »</text>
<circle cx="107.4" cy="201.3" r="3.9" fill="#f1f1f1" stroke="#3a3e44" stroke-width="0.6"/>
<text x="114.1" y="205.2" fill="#5edc63" stroke="#5edc63" stroke-width="0.3" font-size="11.6" style="font-style:italic;" text-anchor="start" textLength="28.0" lengthAdjust="spacingAndGlyphs">name</text>
<text x="145.3" y="205.2" fill="#7aa2fc" font-size="11.6" style="font-style:italic;font-weight:bold;" text-anchor="start" textLength="67.3" lengthAdjust="spacingAndGlyphs">varchar(200)</text>
<path d="M103.80 219.80L107.90 215.70L111.40 218.80V223.50H106.80z" fill="#dedcfc" stroke="#6c62d2" stroke-width="0.8" stroke-linejoin="round"/>
<text x="114.1" y="223.8" fill="#5edc63" stroke="#5edc63" stroke-width="0.3" font-size="11.6" style="font-style:italic;" text-anchor="start" textLength="53.7" lengthAdjust="spacingAndGlyphs">table_g_pk</text>
<text x="171.7" y="223.8" fill="#7aa2fc" font-size="11.6" style="font-style:italic;font-weight:bold;" text-anchor="start" textLength="54.9" lengthAdjust="spacingAndGlyphs">constraint</text>
<text x="233.5" y="223.8" fill="#e264de" stroke="#e264de" stroke-width="0.3" font-size="11.6" style="font-style:italic;" text-anchor="start" textLength="28.4" lengthAdjust="spacingAndGlyphs">« pk »</text>
<path d="M165.2 234.8l3.2-3.2 3.2 3.2-3.2 3.2z" fill="#4db4f2"/>
<path d="M176.9 237.9l4-6.4 4 6.4z" fill="#62c2f7"/>
<path d="M189.4 231.9h7.4l-3.7 6z" fill="#2e6f9c" stroke="#62c2f7" stroke-width="0.5" stroke-opacity="0.6"/>
</g>
<g id="view_test">
<path d="M103.5 287.2a4.5 4.5 0 0 1 4.5 -4.5h108.6a4.5 4.5 0 0 1 4.5 4.5v89.7a4.5 4.5 0 0 1 -4.5 4.5h-108.6a4.5 4.5 0 0 1 -4.5 -4.5z" fill="#000" opacity="0.26"/>
<path d="M100.5 298.3h117.6v75.6a4.5 4.5 0 0 1 -4.5 4.5h-108.6a4.5 4.5 0 0 1 -4.5 -4.5z" fill="#464c54" stroke="#5a6068" stroke-width="0.9" stroke-dasharray="2.5 1.5"/>
<path d="M100.5 367.4h117.6" stroke="#5d636a" stroke-width="1" stroke-dasharray="2.5 1.5"/>
<path d="M100.5 298.3v-14.1a4.5 4.5 0 0 1 4.5 -4.5h108.6a4.5 4.5 0 0 1 4.5 4.5v14.1z" fill="url(#gv)" stroke="#f3d91c" stroke-width="0.9" stroke-dasharray="2.5 1.5"/>
<text x="106.6" y="292.7" fill="#0b0b0b" stroke="#0b0b0b" stroke-width="0.3" font-size="12" style="font-style:italic;" text-anchor="start" textLength="52.1" lengthAdjust="spacingAndGlyphs">schema_b.</text>
<text x="158.5" y="292.7" fill="#0b0b0b" font-size="12" style="font-weight:bold;" text-anchor="start" textLength="53.5" lengthAdjust="spacingAndGlyphs">view_test</text>
<circle cx="106.7" cy="307.9" r="3.3" fill="#a9d8ff" stroke="#1f3550" stroke-width="0.9"/>
<text x="112.8" y="311.8" fill="#f2f2f2" stroke="#f2f2f2" stroke-width="0.3" font-size="11.6" style="" text-anchor="start" textLength="9.4" lengthAdjust="spacingAndGlyphs">id</text>
<text x="146.1" y="311.8" fill="#7aa2fc" font-size="11.6" style="font-style:italic;font-weight:bold;" text-anchor="start" textLength="39.2" lengthAdjust="spacingAndGlyphs">integer</text>
<circle cx="106.7" cy="324.6" r="3.3" fill="#a9d8ff" stroke="#1f3550" stroke-width="0.9"/>
<text x="112.8" y="328.5" fill="#f2f2f2" stroke="#f2f2f2" stroke-width="0.3" font-size="11.6" style="" text-anchor="start" textLength="21.2" lengthAdjust="spacingAndGlyphs">id_a</text>
<text x="146.1" y="328.5" fill="#7aa2fc" font-size="11.6" style="font-style:italic;font-weight:bold;" text-anchor="start" textLength="29.9" lengthAdjust="spacingAndGlyphs">serial</text>
<circle cx="106.7" cy="341.4" r="3.3" fill="#a9d8ff" stroke="#1f3550" stroke-width="0.9"/>
<text x="112.8" y="345.3" fill="#f2f2f2" stroke="#f2f2f2" stroke-width="0.3" font-size="11.6" style="" text-anchor="start" textLength="30.3" lengthAdjust="spacingAndGlyphs">name</text>
<text x="146.1" y="345.3" fill="#7aa2fc" font-size="11.6" style="font-style:italic;font-weight:bold;" text-anchor="start" textLength="67.3" lengthAdjust="spacingAndGlyphs">varchar(200)</text>
<circle cx="106.7" cy="357.9" r="3.3" fill="#a9d8ff" stroke="#1f3550" stroke-width="0.9"/>
<text x="112.8" y="361.8" fill="#f2f2f2" stroke="#f2f2f2" stroke-width="0.3" font-size="11.6" style="" text-anchor="start" textLength="28.5" lengthAdjust="spacingAndGlyphs">_expr</text>
<text x="146.1" y="361.8" fill="#7aa2fc" font-size="11.6" style="font-style:italic;font-weight:bold;" text-anchor="start" textLength="57.1" lengthAdjust="spacingAndGlyphs">expression</text>
<path d="M142.4 372.9l3.2-3.2 3.2 3.2-3.2 3.2z" fill="#f7e02a"/>
<path d="M154.1 376.0l4-6.4 4 6.4z" fill="#f7e02a"/>
<path d="M166.6 370.0h7.4l-3.7 6z" fill="#8a7f20" stroke="#f7e02a" stroke-width="0.5" stroke-opacity="0.6"/>
</g>
<g id="table_b">
<path d="M103.2 451.9a4.5 4.5 0 0 1 4.5 -4.5h154.8a4.5 4.5 0 0 1 4.5 4.5v75.1a4.5 4.5 0 0 1 -4.5 4.5h-154.8a4.5 4.5 0 0 1 -4.5 -4.5z" fill="#000" opacity="0.26"/>
<path d="M100.2 462.8h163.8v61.2a4.5 4.5 0 0 1 -4.5 4.5h-154.8a4.5 4.5 0 0 1 -4.5 -4.5z" fill="#464c54" stroke="#5a6068" stroke-width="0.9"/>
<path d="M100.2 498.4h163.8" stroke="#5d636a" stroke-width="1"/>
<path d="M100.2 517.0h163.8" stroke="#5d636a" stroke-width="1"/>
<path d="M100.2 462.8v-13.9a4.5 4.5 0 0 1 4.5 -4.5h154.8a4.5 4.5 0 0 1 4.5 4.5v13.9z" fill="url(#gt)" stroke="#74c6ff" stroke-width="0.9"/>
<text x="145.4" y="457.3" fill="#0b0b0b" stroke="#0b0b0b" stroke-width="0.3" font-size="12" style="font-style:italic;" text-anchor="start" textLength="33.0" lengthAdjust="spacingAndGlyphs">public.</text>
<text x="178.2" y="457.3" fill="#ffffff" font-size="12" style="font-weight:bold;" text-anchor="start" textLength="40.6" lengthAdjust="spacingAndGlyphs">table_b</text>
<path d="M103.50 470.00a1 1 0 0 1 1 -1h0.8a1 1 0 0 1 1 1v1h5.4v3h-1.1v0.8h-1v-0.8h-0.8v0.8h-1v-0.8h-1.500v1.200a1 1 0 0 1 -1 1h-0.8a1 1 0 0 1 -1 -1z" fill="#f8e745" stroke="#7a6a12" stroke-width="0.6"/>
<text x="114.1" y="476.8" fill="#36a6f3" stroke="#36a6f3" stroke-width="0.3" font-size="11.6" style="font-style:italic;" text-anchor="start" textLength="21.2" lengthAdjust="spacingAndGlyphs">id_b</text>
<text x="138.6" y="476.8" fill="#7aa2fc" font-size="11.6" style="font-style:italic;font-weight:bold;" text-anchor="start" textLength="29.9" lengthAdjust="spacingAndGlyphs">serial</text>
<text x="233.5" y="476.8" fill="#e264de" stroke="#e264de" stroke-width="0.3" font-size="11.6" style="font-style:italic;" text-anchor="start" textLength="28.4" lengthAdjust="spacingAndGlyphs">« pk »</text>
<circle cx="107.4" cy="489.2" r="3.9" fill="#d9eeff" stroke="#34506c" stroke-width="0.6"/>
<text x="114.1" y="493.1" fill="#f2f2f2" stroke="#f2f2f2" stroke-width="0.3" font-size="11.6" style="font-style:italic;" text-anchor="start" textLength="16.3" lengthAdjust="spacingAndGlyphs">sku</text>
<text x="138.6" y="493.1" fill="#7aa2fc" font-size="11.6" style="font-style:italic;font-weight:bold;" text-anchor="start" textLength="39.2" lengthAdjust="spacingAndGlyphs">integer</text>
<text x="232.3" y="493.1" fill="#e264de" stroke="#e264de" stroke-width="0.3" font-size="11.6" style="font-style:italic;" text-anchor="start" textLength="29.6" lengthAdjust="spacingAndGlyphs">« nn »</text>
<path d="M103.80 507.80L107.90 503.70L111.40 506.80V511.50H106.80z" fill="#dedcfc" stroke="#6c62d2" stroke-width="0.8" stroke-linejoin="round"/>
<text x="114.1" y="511.8" fill="#40d8cc" stroke="#40d8cc" stroke-width="0.3" font-size="11.6" style="font-style:italic;" text-anchor="start" textLength="53.7" lengthAdjust="spacingAndGlyphs">table_b_pk</text>
<text x="171.7" y="511.8" fill="#7aa2fc" font-size="11.6" style="font-style:italic;font-weight:bold;" text-anchor="start" textLength="54.9" lengthAdjust="spacingAndGlyphs">constraint</text>
<text x="233.5" y="511.8" fill="#e264de" stroke="#e264de" stroke-width="0.3" font-size="11.6" style="font-style:italic;" text-anchor="start" textLength="28.4" lengthAdjust="spacingAndGlyphs">« pk »</text>
<path d="M165.2 522.8l3.2-3.2 3.2 3.2-3.2 3.2z" fill="#4db4f2"/>
<path d="M176.9 525.9l4-6.4 4 6.4z" fill="#62c2f7"/>
<path d="M189.4 519.9h7.4l-3.7 6z" fill="#2e6f9c" stroke="#62c2f7" stroke-width="0.5" stroke-opacity="0.6"/>
</g>
<g id="table_a">
<path d="M514.3 163.9a4.5 4.5 0 0 1 4.5 -4.5h155.3a4.5 4.5 0 0 1 4.5 4.5v92.0a4.5 4.5 0 0 1 -4.5 4.5h-155.3a4.5 4.5 0 0 1 -4.5 -4.5z" fill="#000" opacity="0.26"/>
<path d="M511.3 174.9h164.3v78.0a4.5 4.5 0 0 1 -4.5 4.5h-155.3a4.5 4.5 0 0 1 -4.5 -4.5z" fill="#464c54" stroke="#5a6068" stroke-width="0.9"/>
<path d="M511.3 210.5h164.3" stroke="#5d636a" stroke-width="1"/>
<path d="M511.3 245.9h164.3" stroke="#5d636a" stroke-width="1"/>
<path d="M511.3 174.9v-14.0a4.5 4.5 0 0 1 4.5 -4.5h155.3a4.5 4.5 0 0 1 4.5 4.5v14.0z" fill="url(#gt)" stroke="#74c6ff" stroke-width="0.9"/>
<text x="556.6" y="169.4" fill="#0b0b0b" stroke="#0b0b0b" stroke-width="0.3" font-size="12" style="font-style:italic;" text-anchor="start" textLength="33.3" lengthAdjust="spacingAndGlyphs">public.</text>
<text x="589.6" y="169.4" fill="#ffffff" font-size="12" style="font-weight:bold;" text-anchor="start" textLength="40.7" lengthAdjust="spacingAndGlyphs">table_a</text>
<path d="M515.00 182.20a1 1 0 0 1 1 -1h0.8a1 1 0 0 1 1 1v1h5.4v3h-1.1v0.8h-1v-0.8h-0.8v0.8h-1v-0.8h-1.500v1.200a1 1 0 0 1 -1 1h-0.8a1 1 0 0 1 -1 -1z" fill="#f8e745" stroke="#7a6a12" stroke-width="0.6"/>
<text x="525.7" y="189.0" fill="#36a6f3" stroke="#36a6f3" stroke-width="0.3" font-size="11.6" style="font-style:italic;" text-anchor="start" textLength="20.5" lengthAdjust="spacingAndGlyphs">id_a</text>
<text x="557.3" y="189.0" fill="#7aa2fc" font-size="11.6" style="font-style:italic;font-weight:bold;" text-anchor="start" textLength="29.9" lengthAdjust="spacingAndGlyphs">serial</text>
<text x="645.6" y="189.0" fill="#e264de" stroke="#e264de" stroke-width="0.3" font-size="11.6" style="font-style:italic;" text-anchor="start" textLength="28.4" lengthAdjust="spacingAndGlyphs">« pk »</text>
<path d="M514.6 201.7l4.3-4.3 4.3 4.3-4.3 4.3z" fill="#f7b90a" stroke="#5a4300" stroke-width="0.6"/>
<text x="525.7" y="205.6" fill="#f2f2f2" stroke="#f2f2f2" stroke-width="0.3" font-size="11.6" style="font-style:italic;" text-anchor="start" textLength="28.2" lengthAdjust="spacingAndGlyphs">name</text>
<text x="557.3" y="205.6" fill="#7aa2fc" font-size="11.6" style="font-style:italic;font-weight:bold;" text-anchor="start" textLength="67.3" lengthAdjust="spacingAndGlyphs">varchar(200)</text>
<text x="644.6" y="205.6" fill="#e264de" stroke="#e264de" stroke-width="0.3" font-size="11.6" style="font-style:italic;" text-anchor="start" textLength="29.4" lengthAdjust="spacingAndGlyphs">« uq »</text>
<path d="M515.30 220.00L519.40 215.90L522.90 219.00V223.70H518.30z" fill="#dedcfc" stroke="#6c62d2" stroke-width="0.8" stroke-linejoin="round"/>
<text x="525.7" y="224.0" fill="#40d8cc" stroke="#40d8cc" stroke-width="0.3" font-size="11.6" style="font-style:italic;" text-anchor="start" textLength="53.0" lengthAdjust="spacingAndGlyphs">table_a_pk</text>
<text x="583.0" y="224.0" fill="#7aa2fc" font-size="11.6" style="font-style:italic;font-weight:bold;" text-anchor="start" textLength="54.9" lengthAdjust="spacingAndGlyphs">constraint</text>
<text x="645.6" y="224.0" fill="#e264de" stroke="#e264de" stroke-width="0.3" font-size="11.6" style="font-style:italic;" text-anchor="start" textLength="28.4" lengthAdjust="spacingAndGlyphs">« pk »</text>
<path d="M515.30 236.60L519.40 232.50L522.90 235.60V240.30H518.30z" fill="#dedcfc" stroke="#6c62d2" stroke-width="0.8" stroke-linejoin="round"/>
<text x="525.7" y="240.6" fill="#40d8cc" stroke="#40d8cc" stroke-width="0.3" font-size="11.6" style="font-style:italic;" text-anchor="start" textLength="53.3" lengthAdjust="spacingAndGlyphs">table_a_uq</text>
<text x="583.0" y="240.6" fill="#7aa2fc" font-size="11.6" style="font-style:italic;font-weight:bold;" text-anchor="start" textLength="54.9" lengthAdjust="spacingAndGlyphs">constraint</text>
<text x="644.6" y="240.6" fill="#e264de" stroke="#e264de" stroke-width="0.3" font-size="11.6" style="font-style:italic;" text-anchor="start" textLength="29.4" lengthAdjust="spacingAndGlyphs">« uq »</text>
<path d="M576.5 251.6l3.2-3.2 3.2 3.2-3.2 3.2z" fill="#4db4f2"/>
<path d="M588.2 254.7l4-6.4 4 6.4z" fill="#62c2f7"/>
<path d="M600.8 248.7h7.4l-3.7 6z" fill="#2e6f9c" stroke="#62c2f7" stroke-width="0.5" stroke-opacity="0.6"/>
</g>
<g id="table_f">
<path d="M774.8 163.9a4.5 4.5 0 0 1 4.5 -4.5h151.8a4.5 4.5 0 0 1 4.5 4.5v58.5a4.5 4.5 0 0 1 -4.5 4.5h-151.8a4.5 4.5 0 0 1 -4.5 -4.5z" fill="#000" opacity="0.26"/>
<path d="M771.8 174.9h160.8v44.5a4.5 4.5 0 0 1 -4.5 4.5h-151.8a4.5 4.5 0 0 1 -4.5 -4.5z" fill="#464c54" stroke="#5a6068" stroke-width="0.9"/>
<path d="M771.8 193.7h160.8" stroke="#5d636a" stroke-width="1"/>
<path d="M771.8 212.5h160.8" stroke="#5d636a" stroke-width="1"/>
<path d="M771.8 174.9v-14.0a4.5 4.5 0 0 1 4.5 -4.5h151.8a4.5 4.5 0 0 1 4.5 4.5v14.0z" fill="url(#gt)" stroke="#74c6ff" stroke-width="0.9"/>
<text x="807.1" y="169.4" fill="#0b0b0b" stroke="#0b0b0b" stroke-width="0.3" font-size="12" style="font-style:italic;" text-anchor="start" textLength="52.3" lengthAdjust="spacingAndGlyphs">schema_a.</text>
<text x="859.2" y="169.4" fill="#ffffff" font-size="12" style="font-weight:bold;" text-anchor="start" textLength="38.1" lengthAdjust="spacingAndGlyphs">table_f</text>
<path d="M775.50 182.20a1 1 0 0 1 1 -1h0.8a1 1 0 0 1 1 1v1h5.4v3h-1.1v0.8h-1v-0.8h-0.8v0.8h-1v-0.8h-1.500v1.200a1 1 0 0 1 -1 1h-0.8a1 1 0 0 1 -1 -1z" fill="#f8e745" stroke="#7a6a12" stroke-width="0.6"/>
<text x="785.7" y="189.0" fill="#36a6f3" stroke="#36a6f3" stroke-width="0.3" font-size="11.6" style="font-style:italic;" text-anchor="start" textLength="19.1" lengthAdjust="spacingAndGlyphs">id_f</text>
<text x="809.9" y="189.0" fill="#7aa2fc" font-size="11.6" style="font-style:italic;font-weight:bold;" text-anchor="start" textLength="46.7" lengthAdjust="spacingAndGlyphs">bigserial</text>
<text x="902.1" y="189.0" fill="#e264de" stroke="#e264de" stroke-width="0.3" font-size="11.6" style="font-style:italic;" text-anchor="start" textLength="28.4" lengthAdjust="spacingAndGlyphs">« pk »</text>
<path d="M775.80 203.40L779.90 199.30L783.40 202.40V207.10H778.80z" fill="#dedcfc" stroke="#6c62d2" stroke-width="0.8" stroke-linejoin="round"/>
<text x="785.7" y="207.4" fill="#40d8cc" stroke="#40d8cc" stroke-width="0.3" font-size="11.6" style="font-style:italic;" text-anchor="start" textLength="50.4" lengthAdjust="spacingAndGlyphs">table_f_pk</text>
<text x="840.3" y="207.4" fill="#7aa2fc" font-size="11.6" style="font-style:italic;font-weight:bold;" text-anchor="start" textLength="54.9" lengthAdjust="spacingAndGlyphs">constraint</text>
<text x="902.1" y="207.4" fill="#e264de" stroke="#e264de" stroke-width="0.3" font-size="11.6" style="font-style:italic;" text-anchor="start" textLength="28.4" lengthAdjust="spacingAndGlyphs">« pk »</text>
<path d="M835.3 218.2l3.2-3.2 3.2 3.2-3.2 3.2z" fill="#4db4f2"/>
<path d="M847.0 221.3l4-6.4 4 6.4z" fill="#62c2f7"/>
<path d="M859.5 215.3h7.4l-3.7 6z" fill="#2e6f9c" stroke="#62c2f7" stroke-width="0.5" stroke-opacity="0.6"/>
</g>
<g id="table_h">
<path d="M1021.7 204.7a4.5 4.5 0 0 1 4.5 -4.5h178.3a4.5 4.5 0 0 1 4.5 4.5v175.2a4.5 4.5 0 0 1 -4.5 4.5h-178.3a4.5 4.5 0 0 1 -4.5 -4.5z" fill="#000" opacity="0.26"/>
<path d="M1018.7 215.8h187.3v161.1a4.5 4.5 0 0 1 -4.5 4.5h-178.3a4.5 4.5 0 0 1 -4.5 -4.5z" fill="#464c54" stroke="#5a6068" stroke-width="0.9"/>
<path d="M1018.7 284.6h187.3" stroke="#5d636a" stroke-width="1"/>
<path d="M1018.7 370.5h187.3" stroke="#5d636a" stroke-width="1"/>
<path d="M1018.7 215.8v-14.1a4.5 4.5 0 0 1 4.5 -4.5h178.3a4.5 4.5 0 0 1 4.5 4.5v14.1z" fill="url(#gt)" stroke="#74c6ff" stroke-width="0.9"/>
<text x="1065.4" y="210.2" fill="#0b0b0b" stroke="#0b0b0b" stroke-width="0.3" font-size="12" style="font-style:italic;" text-anchor="start" textLength="53.0" lengthAdjust="spacingAndGlyphs">schema_a.</text>
<text x="1118.2" y="210.2" fill="#ffffff" font-size="12" style="font-weight:bold;" text-anchor="start" textLength="41.0" lengthAdjust="spacingAndGlyphs">table_h</text>
<path d="M1022.70 223.00a1 1 0 0 1 1 -1h0.8a1 1 0 0 1 1 1v1h5.4v3h-1.1v0.8h-1v-0.8h-0.8v0.8h-1v-0.8h-1.500v1.200a1 1 0 0 1 -1 1h-0.8a1 1 0 0 1 -1 -1z" fill="#f8e745" stroke="#7a6a12" stroke-width="0.6"/>
<text x="1033.1" y="229.8" fill="#36a6f3" stroke="#36a6f3" stroke-width="0.3" font-size="11.6" style="font-style:italic;" text-anchor="start" textLength="21.5" lengthAdjust="spacingAndGlyphs">id_h</text>
<text x="1086.7" y="229.8" fill="#7aa2fc" font-size="11.6" style="font-style:italic;font-weight:bold;" text-anchor="start" textLength="29.9" lengthAdjust="spacingAndGlyphs">serial</text>
<text x="1176.1" y="229.8" fill="#e264de" stroke="#e264de" stroke-width="0.3" font-size="11.6" style="font-style:italic;" text-anchor="start" textLength="28.4" lengthAdjust="spacingAndGlyphs">« pk »</text>
<path d="M1022.2 241.1h4v-2.6l4.8 4.1-4.8 4.1v-2.600h-4z" fill="#f96c42" stroke="#7a2810" stroke-width="0.6"/>
<text x="1033.1" y="246.2" fill="#f2f2f2" stroke="#f2f2f2" stroke-width="0.3" font-size="11.6" style="font-style:italic;" text-anchor="start" textLength="50.5" lengthAdjust="spacingAndGlyphs">table_a_id</text>
<text x="1086.7" y="246.2" fill="#7aa2fc" font-size="11.6" style="font-style:italic;font-weight:bold;" text-anchor="start" textLength="39.2" lengthAdjust="spacingAndGlyphs">integer</text>
<text x="1178.7" y="246.2" fill="#e264de" stroke="#e264de" stroke-width="0.3" font-size="11.6" style="font-style:italic;" text-anchor="start" textLength="25.8" lengthAdjust="spacingAndGlyphs">« fk »</text>
<path d="M1022.2 257.9h4v-2.6l4.8 4.1-4.8 4.1v-2.600h-4z" fill="#f96c42" stroke="#7a2810" stroke-width="0.6"/>
<text x="1033.1" y="263.0" fill="#f2f2f2" stroke="#f2f2f2" stroke-width="0.3" font-size="11.6" style="font-style:italic;" text-anchor="start" textLength="50.0" lengthAdjust="spacingAndGlyphs">table_e_id</text>
<text x="1086.7" y="263.0" fill="#7aa2fc" font-size="11.6" style="font-style:italic;font-weight:bold;" text-anchor="start" textLength="39.2" lengthAdjust="spacingAndGlyphs">integer</text>
<text x="1178.7" y="263.0" fill="#e264de" stroke="#e264de" stroke-width="0.3" font-size="11.6" style="font-style:italic;" text-anchor="start" textLength="25.8" lengthAdjust="spacingAndGlyphs">« fk »</text>
<path d="M1022.2 274.3h4v-2.6l4.8 4.1-4.8 4.1v-2.600h-4z" fill="#f96c42" stroke="#7a2810" stroke-width="0.6"/>
<text x="1033.1" y="279.4" fill="#f2f2f2" stroke="#f2f2f2" stroke-width="0.3" font-size="11.6" style="font-style:italic;" text-anchor="start" textLength="47.9" lengthAdjust="spacingAndGlyphs">table_f_id</text>
<text x="1086.7" y="279.4" fill="#7aa2fc" font-size="11.6" style="font-style:italic;font-weight:bold;" text-anchor="start" textLength="39.2" lengthAdjust="spacingAndGlyphs">integer</text>
<text x="1178.7" y="279.4" fill="#e264de" stroke="#e264de" stroke-width="0.3" font-size="11.6" style="font-style:italic;" text-anchor="start" textLength="25.8" lengthAdjust="spacingAndGlyphs">« fk »</text>
<path d="M1023.00 294.80L1027.10 290.70L1030.60 293.80V298.50H1026.00z" fill="#dedcfc" stroke="#6c62d2" stroke-width="0.8" stroke-linejoin="round"/>
<text x="1033.1" y="298.8" fill="#40d8cc" stroke="#40d8cc" stroke-width="0.3" font-size="11.6" style="font-style:italic;" text-anchor="start" textLength="53.5" lengthAdjust="spacingAndGlyphs">table_h_pk</text>
<text x="1113.7" y="298.8" fill="#7aa2fc" font-size="11.6" style="font-style:italic;font-weight:bold;" text-anchor="start" textLength="54.9" lengthAdjust="spacingAndGlyphs">constraint</text>
<text x="1176.1" y="298.8" fill="#e264de" stroke="#e264de" stroke-width="0.3" font-size="11.6" style="font-style:italic;" text-anchor="start" textLength="28.4" lengthAdjust="spacingAndGlyphs">« pk »</text>
<path d="M1023.00 311.60L1027.10 307.50L1030.60 310.60V315.30H1026.00z" fill="#dedcfc" stroke="#6c62d2" stroke-width="0.8" stroke-linejoin="round"/>
<text x="1033.1" y="315.6" fill="#40d8cc" stroke="#40d8cc" stroke-width="0.3" font-size="11.6" style="font-style:italic;" text-anchor="start" textLength="50.5" lengthAdjust="spacingAndGlyphs">table_a_fk</text>
<text x="1113.7" y="315.6" fill="#7aa2fc" font-size="11.6" style="font-style:italic;font-weight:bold;" text-anchor="start" textLength="54.9" lengthAdjust="spacingAndGlyphs">constraint</text>
<text x="1178.7" y="315.6" fill="#e264de" stroke="#e264de" stroke-width="0.3" font-size="11.6" style="font-style:italic;" text-anchor="start" textLength="25.8" lengthAdjust="spacingAndGlyphs">« fk »</text>
<path d="M1023.00 328.10L1027.10 324.00L1030.60 327.10V331.80H1026.00z" fill="#dedcfc" stroke="#6c62d2" stroke-width="0.8" stroke-linejoin="round"/>
<text x="1033.1" y="332.1" fill="#40d8cc" stroke="#40d8cc" stroke-width="0.3" font-size="11.6" style="font-style:italic;" text-anchor="start" textLength="50.5" lengthAdjust="spacingAndGlyphs">table_g_fk</text>
<text x="1113.7" y="332.1" fill="#7aa2fc" font-size="11.6" style="font-style:italic;font-weight:bold;" text-anchor="start" textLength="54.9" lengthAdjust="spacingAndGlyphs">constraint</text>
<text x="1178.7" y="332.1" fill="#e264de" stroke="#e264de" stroke-width="0.3" font-size="11.6" style="font-style:italic;" text-anchor="start" textLength="25.8" lengthAdjust="spacingAndGlyphs">« fk »</text>
<path d="M1023.00 344.50L1027.10 340.40L1030.60 343.50V348.20H1026.00z" fill="#dedcfc" stroke="#6c62d2" stroke-width="0.8" stroke-linejoin="round"/>
<text x="1033.1" y="348.5" fill="#40d8cc" stroke="#40d8cc" stroke-width="0.3" font-size="11.6" style="font-style:italic;" text-anchor="start" textLength="50.0" lengthAdjust="spacingAndGlyphs">table_e_fk</text>
<text x="1113.7" y="348.5" fill="#7aa2fc" font-size="11.6" style="font-style:italic;font-weight:bold;" text-anchor="start" textLength="54.9" lengthAdjust="spacingAndGlyphs">constraint</text>
<text x="1178.7" y="348.5" fill="#e264de" stroke="#e264de" stroke-width="0.3" font-size="11.6" style="font-style:italic;" text-anchor="start" textLength="25.8" lengthAdjust="spacingAndGlyphs">« fk »</text>
<path d="M1023.00 361.30L1027.10 357.20L1030.60 360.30V365.00H1026.00z" fill="#dedcfc" stroke="#6c62d2" stroke-width="0.8" stroke-linejoin="round"/>
<text x="1033.1" y="365.3" fill="#40d8cc" stroke="#40d8cc" stroke-width="0.3" font-size="11.6" style="font-style:italic;" text-anchor="start" textLength="77.8" lengthAdjust="spacingAndGlyphs">dummy_trigger</text>
<text x="1113.7" y="365.3" fill="#7aa2fc" font-size="11.6" style="font-style:italic;font-weight:bold;" text-anchor="start" textLength="37.4" lengthAdjust="spacingAndGlyphs">trigger</text>
<text x="1175.5" y="365.3" fill="#e264de" stroke="#e264de" stroke-width="0.3" font-size="11.6" style="font-style:italic;" text-anchor="start" textLength="29.0" lengthAdjust="spacingAndGlyphs">« b i »</text>
<path d="M1095.4 375.9l3.2-3.2 3.2 3.2-3.2 3.2z" fill="#4db4f2"/>
<path d="M1107.1 379.1l4-6.4 4 6.4z" fill="#62c2f7"/>
<path d="M1119.6 373.1h7.4l-3.7 6z" fill="#2e6f9c" stroke="#62c2f7" stroke-width="0.5" stroke-opacity="0.6"/>
</g>
<g id="table_d">
<path d="M514.5 411.0a4.5 4.5 0 0 1 4.5 -4.5h161.4a4.5 4.5 0 0 1 4.5 4.5v124.7a4.5 4.5 0 0 1 -4.5 4.5h-161.4a4.5 4.5 0 0 1 -4.5 -4.5z" fill="#000" opacity="0.26"/>
<path d="M511.5 421.5h170.4v111.2a4.5 4.5 0 0 1 -4.5 4.5h-161.4a4.5 4.5 0 0 1 -4.5 -4.5z" fill="#464c54" stroke="#5a6068" stroke-width="0.9"/>
<path d="M511.5 472.7h170.4" stroke="#5d636a" stroke-width="1"/>
<path d="M511.5 525.8h170.4" stroke="#5d636a" stroke-width="1"/>
<path d="M511.5 421.5v-13.5a4.5 4.5 0 0 1 4.5 -4.5h161.4a4.5 4.5 0 0 1 4.5 4.5v13.5z" fill="url(#gt)" stroke="#74c6ff" stroke-width="0.9"/>
<text x="550.2" y="416.2" fill="#0b0b0b" stroke="#0b0b0b" stroke-width="0.3" font-size="12" style="font-style:italic;" text-anchor="start" textLength="52.5" lengthAdjust="spacingAndGlyphs">schema_a.</text>
<text x="602.5" y="416.2" fill="#ffffff" font-size="12" style="font-weight:bold;" text-anchor="start" textLength="40.8" lengthAdjust="spacingAndGlyphs">table_d</text>
<path d="M514.90 428.40a1 1 0 0 1 1 -1h0.8a1 1 0 0 1 1 1v1h5.4v3h-1.1v0.8h-1v-0.8h-0.8v0.8h-1v-0.8h-1.500v1.200a1 1 0 0 1 -1 1h-0.8a1 1 0 0 1 -1 -1z" fill="#f8e745" stroke="#7a6a12" stroke-width="0.6"/>
<text x="525.2" y="435.2" fill="#5edc63" stroke="#5edc63" stroke-width="0.3" font-size="11.6" style="font-style:italic;" text-anchor="start" textLength="61.8" lengthAdjust="spacingAndGlyphs">id_a_table_a</text>
<text x="590.0" y="435.2" fill="#7aa2fc" font-size="11.6" style="font-style:italic;font-weight:bold;" text-anchor="start" textLength="39.2" lengthAdjust="spacingAndGlyphs">integer</text>
<text x="639.6" y="435.2" fill="#e264de" stroke="#e264de" stroke-width="0.3" font-size="11.6" style="font-style:italic;" text-anchor="start" textLength="41.0" lengthAdjust="spacingAndGlyphs">« pk fk »</text>
<circle cx="518.8" cy="448.5" r="3.9" fill="#d9eeff" stroke="#34506c" stroke-width="0.6"/>
<text x="525.2" y="452.4" fill="#5edc63" stroke="#5edc63" stroke-width="0.3" font-size="11.6" style="font-style:italic;" text-anchor="start" textLength="50.0" lengthAdjust="spacingAndGlyphs">test_attrib</text>
<text x="590.0" y="452.4" fill="#7aa2fc" font-size="11.6" style="font-style:italic;font-weight:bold;" text-anchor="start" textLength="44.1" lengthAdjust="spacingAndGlyphs">smallint</text>
<text x="651.0" y="452.4" fill="#e264de" stroke="#e264de" stroke-width="0.3" font-size="11.6" style="font-style:italic;" text-anchor="start" textLength="29.6" lengthAdjust="spacingAndGlyphs">« nn »</text>
<path d="M514.4 463.4h4v-2.6l4.8 4.1-4.8 4.1v-2.600h-4z" fill="#f96c42" stroke="#7a2810" stroke-width="0.6"/>
<text x="525.2" y="468.5" fill="#5edc63" stroke="#5edc63" stroke-width="0.3" font-size="11.6" style="font-style:italic;" text-anchor="start" textLength="61.8" lengthAdjust="spacingAndGlyphs">id_b_table_b</text>
<text x="590.0" y="468.5" fill="#7aa2fc" font-size="11.6" style="font-style:italic;font-weight:bold;" text-anchor="start" textLength="39.2" lengthAdjust="spacingAndGlyphs">integer</text>
<text x="638.8" y="468.5" fill="#e264de" stroke="#e264de" stroke-width="0.3" font-size="11.6" style="font-style:italic;" text-anchor="start" textLength="41.8" lengthAdjust="spacingAndGlyphs">« fk nn »</text>
<path d="M515.20 483.80L519.30 479.70L522.80 482.80V487.50H518.20z" fill="#dedcfc" stroke="#6c62d2" stroke-width="0.8" stroke-linejoin="round"/>
<text x="525.2" y="487.8" fill="#5edc63" stroke="#5edc63" stroke-width="0.3" font-size="11.6" style="font-style:italic;" text-anchor="start" textLength="53.3" lengthAdjust="spacingAndGlyphs">table_d_pk</text>
<text x="590.0" y="487.8" fill="#7aa2fc" font-size="11.6" style="font-style:italic;font-weight:bold;" text-anchor="start" textLength="54.9" lengthAdjust="spacingAndGlyphs">constraint</text>
<text x="652.2" y="487.8" fill="#e264de" stroke="#e264de" stroke-width="0.3" font-size="11.6" style="font-style:italic;" text-anchor="start" textLength="28.4" lengthAdjust="spacingAndGlyphs">« pk »</text>
<path d="M515.20 500.40L519.30 496.30L522.80 499.40V504.10H518.20z" fill="#dedcfc" stroke="#6c62d2" stroke-width="0.8" stroke-linejoin="round"/>
<text x="525.2" y="504.4" fill="#5edc63" stroke="#5edc63" stroke-width="0.3" font-size="11.6" style="font-style:italic;" text-anchor="start" textLength="50.0" lengthAdjust="spacingAndGlyphs">table_a_fk</text>
<text x="590.0" y="504.4" fill="#7aa2fc" font-size="11.6" style="font-style:italic;font-weight:bold;" text-anchor="start" textLength="54.9" lengthAdjust="spacingAndGlyphs">constraint</text>
<text x="654.8" y="504.4" fill="#e264de" stroke="#e264de" stroke-width="0.3" font-size="11.6" style="font-style:italic;" text-anchor="start" textLength="25.8" lengthAdjust="spacingAndGlyphs">« fk »</text>
<path d="M515.20 516.80L519.30 512.70L522.80 515.80V520.50H518.20z" fill="#dedcfc" stroke="#6c62d2" stroke-width="0.8" stroke-linejoin="round"/>
<text x="525.2" y="520.8" fill="#5edc63" stroke="#5edc63" stroke-width="0.3" font-size="11.6" style="font-style:italic;" text-anchor="start" textLength="50.0" lengthAdjust="spacingAndGlyphs">table_b_fk</text>
<text x="590.0" y="520.8" fill="#7aa2fc" font-size="11.6" style="font-style:italic;font-weight:bold;" text-anchor="start" textLength="54.9" lengthAdjust="spacingAndGlyphs">constraint</text>
<text x="654.8" y="520.8" fill="#e264de" stroke="#e264de" stroke-width="0.3" font-size="11.6" style="font-style:italic;" text-anchor="start" textLength="25.8" lengthAdjust="spacingAndGlyphs">« fk »</text>
<path d="M579.8 531.5l3.2-3.2 3.2 3.2-3.2 3.2z" fill="#4db4f2"/>
<path d="M591.5 534.6l4-6.4 4 6.4z" fill="#62c2f7"/>
<path d="M604.0 528.6h7.4l-3.7 6z" fill="#2e6f9c" stroke="#62c2f7" stroke-width="0.5" stroke-opacity="0.6"/>
</g>
<g id="table_c">
<path d="M734.0 410.7a4.5 4.5 0 0 1 4.5 -4.5h157.2a4.5 4.5 0 0 1 4.5 4.5v141.3a4.5 4.5 0 0 1 -4.5 4.5h-157.2a4.5 4.5 0 0 1 -4.5 -4.5z" fill="#000" opacity="0.26"/>
<path d="M731.0 421.1h166.2v127.9a4.5 4.5 0 0 1 -4.5 4.5h-157.2a4.5 4.5 0 0 1 -4.5 -4.5z" fill="#464c54" stroke="#5a6068" stroke-width="0.9"/>
<path d="M731.0 507.0h166.2" stroke="#5d636a" stroke-width="1"/>
<path d="M731.0 542.3h166.2" stroke="#5d636a" stroke-width="1"/>
<path d="M731.0 421.1v-13.4a4.5 4.5 0 0 1 4.5 -4.5h157.2a4.5 4.5 0 0 1 4.5 4.5v13.4z" fill="url(#gt)" stroke="#74c6ff" stroke-width="0.9"/>
<text x="778.0" y="415.9" fill="#0b0b0b" stroke="#0b0b0b" stroke-width="0.3" font-size="12" style="font-style:italic;" text-anchor="start" textLength="33.0" lengthAdjust="spacingAndGlyphs">public.</text>
<text x="810.8" y="415.9" fill="#ffffff" font-size="12" style="font-weight:bold;" text-anchor="start" textLength="39.5" lengthAdjust="spacingAndGlyphs">table_c</text>
<path d="M734.10 428.80a1 1 0 0 1 1 -1h0.8a1 1 0 0 1 1 1v1h5.4v3h-1.1v0.8h-1v-0.8h-0.8v0.8h-1v-0.8h-1.500v1.200a1 1 0 0 1 -1 1h-0.8a1 1 0 0 1 -1 -1z" fill="#f8e745" stroke="#7a6a12" stroke-width="0.6"/>
<text x="744.7" y="435.6" fill="#36a6f3" stroke="#36a6f3" stroke-width="0.3" font-size="11.6" style="font-style:italic;" text-anchor="start" textLength="20.0" lengthAdjust="spacingAndGlyphs">id_c</text>
<text x="805.3" y="435.6" fill="#7aa2fc" font-size="11.6" style="font-style:italic;font-weight:bold;" text-anchor="start" textLength="29.9" lengthAdjust="spacingAndGlyphs">serial</text>
<text x="867.4" y="435.6" fill="#e264de" stroke="#e264de" stroke-width="0.3" font-size="11.6" style="font-style:italic;" text-anchor="start" textLength="28.4" lengthAdjust="spacingAndGlyphs">« pk »</text>
<circle cx="738.0" cy="447.9" r="3.9" fill="#f1f1f1" stroke="#3a3e44" stroke-width="0.6"/>
<text x="744.7" y="451.8" fill="#f2f2f2" stroke="#f2f2f2" stroke-width="0.3" font-size="11.6" style="" text-anchor="start" textLength="29.5" lengthAdjust="spacingAndGlyphs">name</text>
<text x="805.3" y="451.8" fill="#7aa2fc" font-size="11.6" style="font-style:italic;font-weight:bold;" text-anchor="start" textLength="67.3" lengthAdjust="spacingAndGlyphs">varchar(200)</text>
<circle cx="738.0" cy="464.8" r="3.9" fill="#f1f1f1" stroke="#3a3e44" stroke-width="0.6"/>
<text x="744.7" y="468.7" fill="#f2f2f2" stroke="#f2f2f2" stroke-width="0.3" font-size="11.6" style="" text-anchor="start" textLength="22.7" lengthAdjust="spacingAndGlyphs">date</text>
<text x="805.3" y="468.7" fill="#7aa2fc" font-size="11.6" style="font-style:italic;font-weight:bold;" text-anchor="start" textLength="24.4" lengthAdjust="spacingAndGlyphs">date</text>
<circle cx="738.0" cy="481.3" r="3.9" fill="#f1f1f1" stroke="#3a3e44" stroke-width="0.6"/>
<text x="744.7" y="485.2" fill="#f2f2f2" stroke="#f2f2f2" stroke-width="0.3" font-size="11.6" style="" text-anchor="start" textLength="28.4" lengthAdjust="spacingAndGlyphs">email</text>
<text x="805.3" y="485.2" fill="#7aa2fc" font-size="11.6" style="font-style:italic;font-weight:bold;" text-anchor="start" textLength="66.2" lengthAdjust="spacingAndGlyphs">public.email</text>
<path d="M733.6 497.1h4v-2.6l4.8 4.1-4.8 4.1v-2.600h-4z" fill="#f96c42" stroke="#7a2810" stroke-width="0.6"/>
<text x="744.7" y="502.2" fill="#5edc63" stroke="#5edc63" stroke-width="0.3" font-size="11.6" style="font-style:italic;" text-anchor="start" textLength="56.6" lengthAdjust="spacingAndGlyphs">id_f_table_f</text>
<text x="805.3" y="502.2" fill="#7aa2fc" font-size="11.6" style="font-style:italic;font-weight:bold;" text-anchor="start" textLength="31.4" lengthAdjust="spacingAndGlyphs">bigint</text>
<text x="870.0" y="502.2" fill="#e264de" stroke="#e264de" stroke-width="0.3" font-size="11.6" style="font-style:italic;" text-anchor="start" textLength="25.8" lengthAdjust="spacingAndGlyphs">« fk »</text>
<path d="M734.40 516.80L738.50 512.70L742.00 515.80V520.50H737.40z" fill="#dedcfc" stroke="#6c62d2" stroke-width="0.8" stroke-linejoin="round"/>
<text x="744.7" y="520.8" fill="#40d8cc" stroke="#40d8cc" stroke-width="0.3" font-size="11.6" style="font-style:italic;" text-anchor="start" textLength="52.0" lengthAdjust="spacingAndGlyphs">table_c_pk</text>
<text x="805.3" y="520.8" fill="#7aa2fc" font-size="11.6" style="font-style:italic;font-weight:bold;" text-anchor="start" textLength="54.9" lengthAdjust="spacingAndGlyphs">constraint</text>
<text x="867.4" y="520.8" fill="#e264de" stroke="#e264de" stroke-width="0.3" font-size="11.6" style="font-style:italic;" text-anchor="start" textLength="28.4" lengthAdjust="spacingAndGlyphs">« pk »</text>
<path d="M734.40 533.40L738.50 529.30L742.00 532.40V537.10H737.40z" fill="#dedcfc" stroke="#6c62d2" stroke-width="0.8" stroke-linejoin="round"/>
<text x="744.7" y="537.4" fill="#5edc63" stroke="#5edc63" stroke-width="0.3" font-size="11.6" style="font-style:italic;" text-anchor="start" textLength="47.0" lengthAdjust="spacingAndGlyphs">table_f_fk</text>
<text x="805.3" y="537.4" fill="#7aa2fc" font-size="11.6" style="font-style:italic;font-weight:bold;" text-anchor="start" textLength="54.9" lengthAdjust="spacingAndGlyphs">constraint</text>
<text x="870.0" y="537.4" fill="#e264de" stroke="#e264de" stroke-width="0.3" font-size="11.6" style="font-style:italic;" text-anchor="start" textLength="25.8" lengthAdjust="spacingAndGlyphs">« fk »</text>
<path d="M797.2 547.9l3.2-3.2 3.2 3.2-3.2 3.2z" fill="#4db4f2"/>
<path d="M808.9 551.0l4-6.4 4 6.4z" fill="#62c2f7"/>
<path d="M821.4 545.0h7.4l-3.7 6z" fill="#2e6f9c" stroke="#62c2f7" stroke-width="0.5" stroke-opacity="0.6"/>
</g>
<g id="table_e">
<path d="M1035.5 424.2a4.5 4.5 0 0 1 4.5 -4.5h156.8a4.5 4.5 0 0 1 4.5 4.5v125.2a4.5 4.5 0 0 1 -4.5 4.5h-156.8a4.5 4.5 0 0 1 -4.5 -4.5z" fill="#000" opacity="0.26"/>
<path d="M1032.5 435.2h165.8v111.2a4.5 4.5 0 0 1 -4.5 4.5h-156.8a4.5 4.5 0 0 1 -4.5 -4.5z" fill="#464c54" stroke="#5a6068" stroke-width="0.9"/>
<path d="M1032.5 520.8h165.8" stroke="#5d636a" stroke-width="1"/>
<path d="M1032.5 539.5h165.8" stroke="#5d636a" stroke-width="1"/>
<path d="M1032.5 435.2v-14.0a4.5 4.5 0 0 1 4.5 -4.5h156.8a4.5 4.5 0 0 1 4.5 4.5v14.0z" fill="url(#gt)" stroke="#74c6ff" stroke-width="0.9"/>
<text x="1068.9" y="429.7" fill="#0b0b0b" stroke="#0b0b0b" stroke-width="0.3" font-size="12" style="font-style:italic;" text-anchor="start" textLength="52.6" lengthAdjust="spacingAndGlyphs">schema_a.</text>
<text x="1121.3" y="429.7" fill="#ffffff" font-size="12" style="font-weight:bold;" text-anchor="start" textLength="40.6" lengthAdjust="spacingAndGlyphs">table_e</text>
<path d="M1035.90 442.40a1 1 0 0 1 1 -1h0.8a1 1 0 0 1 1 1v1h5.4v3h-1.1v0.8h-1v-0.8h-0.8v0.8h-1v-0.8h-1.500v1.200a1 1 0 0 1 -1 1h-0.8a1 1 0 0 1 -1 -1z" fill="#f8e745" stroke="#7a6a12" stroke-width="0.6"/>
<text x="1045.7" y="449.2" fill="#5edc63" stroke="#5edc63" stroke-width="0.3" font-size="11.6" style="font-style:italic;" text-anchor="start" textLength="19.7" lengthAdjust="spacingAndGlyphs">id_c</text>
<text x="1106.4" y="449.2" fill="#7aa2fc" font-size="11.6" style="font-style:italic;font-weight:bold;" text-anchor="start" textLength="39.2" lengthAdjust="spacingAndGlyphs">integer</text>
<text x="1168.1" y="449.2" fill="#e264de" stroke="#e264de" stroke-width="0.3" font-size="11.6" style="font-style:italic;" text-anchor="start" textLength="28.4" lengthAdjust="spacingAndGlyphs">« pk »</text>
<circle cx="1039.8" cy="461.7" r="3.9" fill="#f1f1f1" stroke="#3a3e44" stroke-width="0.6"/>
<text x="1045.7" y="465.6" fill="#5edc63" stroke="#5edc63" stroke-width="0.3" font-size="11.6" style="font-style:italic;" text-anchor="start" textLength="28.2" lengthAdjust="spacingAndGlyphs">name</text>
<text x="1106.4" y="465.6" fill="#7aa2fc" font-size="11.6" style="font-style:italic;font-weight:bold;" text-anchor="start" textLength="67.3" lengthAdjust="spacingAndGlyphs">varchar(200)</text>
<circle cx="1039.8" cy="478.4" r="3.9" fill="#f1f1f1" stroke="#3a3e44" stroke-width="0.6"/>
<text x="1045.7" y="482.3" fill="#5edc63" stroke="#5edc63" stroke-width="0.3" font-size="11.6" style="font-style:italic;" text-anchor="start" textLength="22.3" lengthAdjust="spacingAndGlyphs">date</text>
<text x="1106.4" y="482.3" fill="#7aa2fc" font-size="11.6" style="font-style:italic;font-weight:bold;" text-anchor="start" textLength="24.4" lengthAdjust="spacingAndGlyphs">date</text>
<circle cx="1039.8" cy="494.9" r="3.9" fill="#f1f1f1" stroke="#3a3e44" stroke-width="0.6"/>
<text x="1045.7" y="498.8" fill="#5edc63" stroke="#5edc63" stroke-width="0.3" font-size="11.6" style="font-style:italic;" text-anchor="start" textLength="27.7" lengthAdjust="spacingAndGlyphs">email</text>
<text x="1106.4" y="498.8" fill="#7aa2fc" font-size="11.6" style="font-style:italic;font-weight:bold;" text-anchor="start" textLength="66.2" lengthAdjust="spacingAndGlyphs">public.email</text>
<circle cx="1039.8" cy="511.9" r="3.9" fill="#f1f1f1" stroke="#3a3e44" stroke-width="0.6"/>
<text x="1045.7" y="515.8" fill="#5edc63" stroke="#5edc63" stroke-width="0.3" font-size="11.6" style="font-style:italic;" text-anchor="start" textLength="55.9" lengthAdjust="spacingAndGlyphs">id_f_table_f</text>
<text x="1106.4" y="515.8" fill="#7aa2fc" font-size="11.6" style="font-style:italic;font-weight:bold;" text-anchor="start" textLength="31.4" lengthAdjust="spacingAndGlyphs">bigint</text>
<path d="M1036.20 530.60L1040.30 526.50L1043.80 529.60V534.30H1039.20z" fill="#dedcfc" stroke="#6c62d2" stroke-width="0.8" stroke-linejoin="round"/>
<text x="1045.7" y="534.6" fill="#5edc63" stroke="#5edc63" stroke-width="0.3" font-size="11.6" style="font-style:italic;" text-anchor="start" textLength="52.6" lengthAdjust="spacingAndGlyphs">table_e_pk</text>
<text x="1106.4" y="534.6" fill="#7aa2fc" font-size="11.6" style="font-style:italic;font-weight:bold;" text-anchor="start" textLength="54.9" lengthAdjust="spacingAndGlyphs">constraint</text>
<text x="1168.1" y="534.6" fill="#e264de" stroke="#e264de" stroke-width="0.3" font-size="11.6" style="font-style:italic;" text-anchor="start" textLength="28.4" lengthAdjust="spacingAndGlyphs">« pk »</text>
<path d="M1098.5 545.2l3.2-3.2 3.2 3.2-3.2 3.2z" fill="#4db4f2"/>
<path d="M1110.2 548.3l4-6.4 4 6.4z" fill="#62c2f7"/>
<path d="M1122.7 542.3h7.4l-3.7 6z" fill="#2e6f9c" stroke="#62c2f7" stroke-width="0.5" stroke-opacity="0.6"/>
</g>
</svg>
</div>
<div id="vscroll"><svg width="10.0" height="439.0" viewBox="1238.0 128.0 10.0 439.0" font-family="Liberation Sans, sans-serif">
<rect x="1238.3" y="128.5" width="9.7" height="9.6" fill="#3a3d41"/>
<rect x="1238.8999999999999" y="138.1" width="9.1" height="152.6" fill="#42464b"/>
<rect x="1238.3" y="558.6999999999999" width="9.7" height="8.6" fill="#3a3d41"/>
<path d="M1239.600 135.400l3.600-3.600 3.600 3.600z" fill="#d8d8d8"/><path d="M1239.600 561.400l3.600 3.600 3.600-3.600z" fill="#d8d8d8"/>
</svg></div>
<div id="hscroll"><svg width="1166.0" height="11.0" viewBox="72.0 567.0 1166.0 11.0" font-family="Liberation Sans, sans-serif">
<rect x="72.4" y="567.3" width="9.600" height="10.4" fill="#3a3d41"/>
<rect x="82.0" y="567.9" width="794" height="9.8" fill="#42464b"/>
<rect x="1229.300" y="567.3" width="9" height="10.4" fill="#3a3d41"/>
<path d="M79.400 569.400l-3.400 3.200 3.400 3.200z" fill="#d8d8d8"/><path d="M1232.400 569.400l3.400 3.200-3.400 3.200z" fill="#d8d8d8"/>
</svg></div>
<div id="bottombar">
<div class="btn" style="left:3.0px;width:77.9px"></div>
<div class="btn" style="left:86.0px;width:88.0px"></div>
<div class="btn" style="left:179.0px;width:61.4px"></div>
<div class="btn" style="left:245.3px;width:82.5px"></div>
<div class="btn" style="left:1018.0px;width:66.8px"></div>
<div class="btn" style="left:1089.5px;width:84.5px"></div>
<svg width="1176.0" height="27.0" viewBox="72.0 578.0 1176.0 27.0" font-family="Liberation Sans, sans-serif">
<rect x="76.2" y="582.6" width="14" height="10.6" rx="1" fill="#fbfbfb" stroke="#15171a" stroke-width="1.2"/><circle cx="79.4" cy="586.4" r="2" fill="#f0566a" stroke="#15171a" stroke-width="0.4"/><rect x="79.8" y="587.2" width="3.6" height="3.6" fill="#3fc9ee" stroke="#15171a" stroke-width="0.4"/><path d="M83.0 591.0l2.200-6.200 2.200 6.200z" fill="#53d860" stroke="#15171a" stroke-width="0.4"/>
<path d="M80.200 593l2.800 3.600 7.600-8.800" stroke="#15171a" stroke-width="3.200" fill="none" stroke-linecap="round" stroke-linejoin="round"/><path d="M80.200 593l2.800 3.600 7.600-8.800" stroke="#5fe06a" stroke-width="1.700" fill="none" stroke-linecap="round" stroke-linejoin="round"/>
<rect x="159" y="582.4" width="13.4" height="10.2" rx="1" fill="#fbfbfb" stroke="#15171a" stroke-width="1.2"/><circle cx="162.2" cy="586.1999999999999" r="2" fill="#f0566a" stroke="#15171a" stroke-width="0.4"/><rect x="162.6" y="587.0" width="3.6" height="3.6" fill="#3fc9ee" stroke="#15171a" stroke-width="0.4"/><path d="M165.8 590.8l2.200-6.200 2.200 6.200z" fill="#53d860" stroke="#15171a" stroke-width="0.4"/>
<path d="M171.600 596.600l3.200 3" stroke="#15171a" stroke-width="1.800" stroke-linecap="round"/><circle cx="168.600" cy="593.600" r="4.300" fill="#7fe3f5" stroke="#15171a" stroke-width="0.9"/>
<path d="M260.200 594.200l7.400 3.400-7.400 3.400-7.400-3.400z" fill="#f5e45a" stroke="#15171a" stroke-width="0.7"/>
<path d="M260.200 589.600l7.400 3.400-7.400 3.400-7.400-3.400z" fill="#3fc9ee" stroke="#15171a" stroke-width="0.7"/>
<path d="M260.200 584.600l7.400 3.600-7.400 3.600-7.400-3.600z" fill="#f0566a" stroke="#15171a" stroke-width="0.7"/>
<path d="M320.400 582.600h8.600l3.400 3.400v13.600h-12z" fill="#f7f7f7" stroke="#15171a" stroke-width="0.9"/>
<rect x="318.400" y="585.600" width="9" height="3.800" rx="1.800" fill="#53d860" stroke="#15171a" stroke-width="0.7"/><rect x="318.400" y="592.400" width="9" height="3.800" rx="1.800" fill="#f0566a" stroke="#15171a" stroke-width="0.7"/>
<circle cx="330.600" cy="596.600" r="3.600" fill="#58d8f3" stroke="#15171a" stroke-width="0.8"/><path d="M330.600 594.600v2.200h1.600" stroke="#15171a" stroke-width="0.8" fill="none"/>
<path d="M632 584.600l5.600 2.200-2.400 0.800-0.800 2.400z" fill="#f2f2f2" stroke="#111" stroke-width="0.5"/>
<path d="M637.600 591.400v5.200M635 594h5.200" stroke="#8fe6f7" stroke-width="1" stroke-dasharray="1 1"/>
<path d="M705 592.800l3.800 3.800" stroke="#15171a" stroke-width="1.700" stroke-linecap="round"/><circle cx="702.200" cy="589.400" r="4.300" fill="url(#gcyan)" stroke="#15171a" stroke-width="0.6"/>
<path d="M745.400 586.400l9.800 10M755.200 586.400l-9.800 10" stroke="#ef5a6e" stroke-width="2.600" stroke-linecap="round"/>
<rect x="825.400" y="586" width="11" height="11" fill="#d9d9d9" stroke="#15171a" stroke-width="0.8"/><path d="M829 586v11M832.800 586v11M825.400 589.600h11M825.400 593.400h11" stroke="#555" stroke-width="0.6"/>
<circle cx="828" cy="594.400" r="1.600" fill="#f0566a"/><rect x="829.600" y="587.200" width="3" height="3" fill="#3fc9ee"/><path d="M832.400 596l1.800-3.600 1.800 3.600z" fill="#f5e45a"/><circle cx="834" cy="588.600" r="1.500" fill="#53d860"/>
<rect x="1091.800" y="584.200" width="6.200" height="6.200" fill="#8fe6f7" stroke="#15171a" stroke-width="0.6"/>
<circle cx="1103.800" cy="586.600" r="3.300" fill="#8be894" stroke="#15171a" stroke-width="0.6"/>
<path d="M1094.600 591.600l2.600 3.800-2.600 3.800-2.600-3.800z" fill="#f28a9a" stroke="#15171a" stroke-width="0.6"/>
<path d="M1099.600 599l3.800-6.800 3.800 6.800z" fill="#f5e45a" stroke="#15171a" stroke-width="0.6"/>
<rect x="1163.2" y="583.2" width="12" height="9.6" rx="1" fill="#fbfbfb" stroke="#15171a" stroke-width="1.2"/><circle cx="1166.4" cy="587.0" r="2" fill="#f0566a" stroke="#15171a" stroke-width="0.4"/><rect x="1166.8" y="587.8000000000001" width="3.6" height="3.6" fill="#3fc9ee" stroke="#15171a" stroke-width="0.4"/><path d="M1170.0 591.6l2.200-6.200 2.200 6.200z" fill="#53d860" stroke="#15171a" stroke-width="0.4"/>
<circle cx="1176.200" cy="591.600" r="2.300" fill="#ddd" stroke="#15171a" stroke-width="1.300"/><circle cx="1170.200" cy="596.600" r="2.300" fill="#ddd" stroke="#15171a" stroke-width="1.300"/>
</svg>
<span class="t" style="left:21.2px;top:6.2px;font-size:11px;font-weight:normal;font-style:normal;letter-spacing:0.060px;color:#f4f4f4">Validation</span>
<span class="t" style="left:104.2px;top:6.2px;font-size:11px;font-weight:normal;font-style:normal;letter-spacing:-0.084px;color:#f4f4f4">Find objects</span>
<span class="t" style="left:197.7px;top:6.2px;font-size:11px;font-weight:normal;font-style:normal;letter-spacing:-0.402px;color:#f4f4f4">Layers</span>
<span class="t" style="left:264.0px;top:6.2px;font-size:11px;font-weight:normal;font-style:normal;letter-spacing:-0.112px;color:#f4f4f4">Changelog</span>
<span class="t" style="left:574.2px;top:6.2px;font-size:11px;font-weight:normal;font-style:normal;letter-spacing:-0.348px;color:#f4f4f4">1913, 687</span>
<span class="t" style="left:641.5px;top:6.2px;font-size:11px;font-weight:normal;font-style:normal;letter-spacing:-0.454px;color:#f4f4f4">110%</span>
<span class="t" style="left:687.9px;top:6.2px;font-size:11px;font-weight:normal;font-style:normal;letter-spacing:-0.102px;color:#f4f4f4">No selection</span>
<span class="t" style="left:769.0px;top:6.2px;font-size:11px;font-weight:normal;font-style:normal;letter-spacing:-0.313px;color:#f4f4f4">N/A</span>
<span class="t" style="left:1036.7px;top:6.2px;font-size:11px;font-weight:normal;font-style:normal;letter-spacing:-0.113px;color:#f4f4f4">Objects</span>
<span class="t" style="left:1108.4px;top:6.2px;font-size:11px;font-weight:normal;font-style:normal;letter-spacing:-0.020px;color:#f4f4f4">Operations</span>
</div>
</div>
</body></html>
